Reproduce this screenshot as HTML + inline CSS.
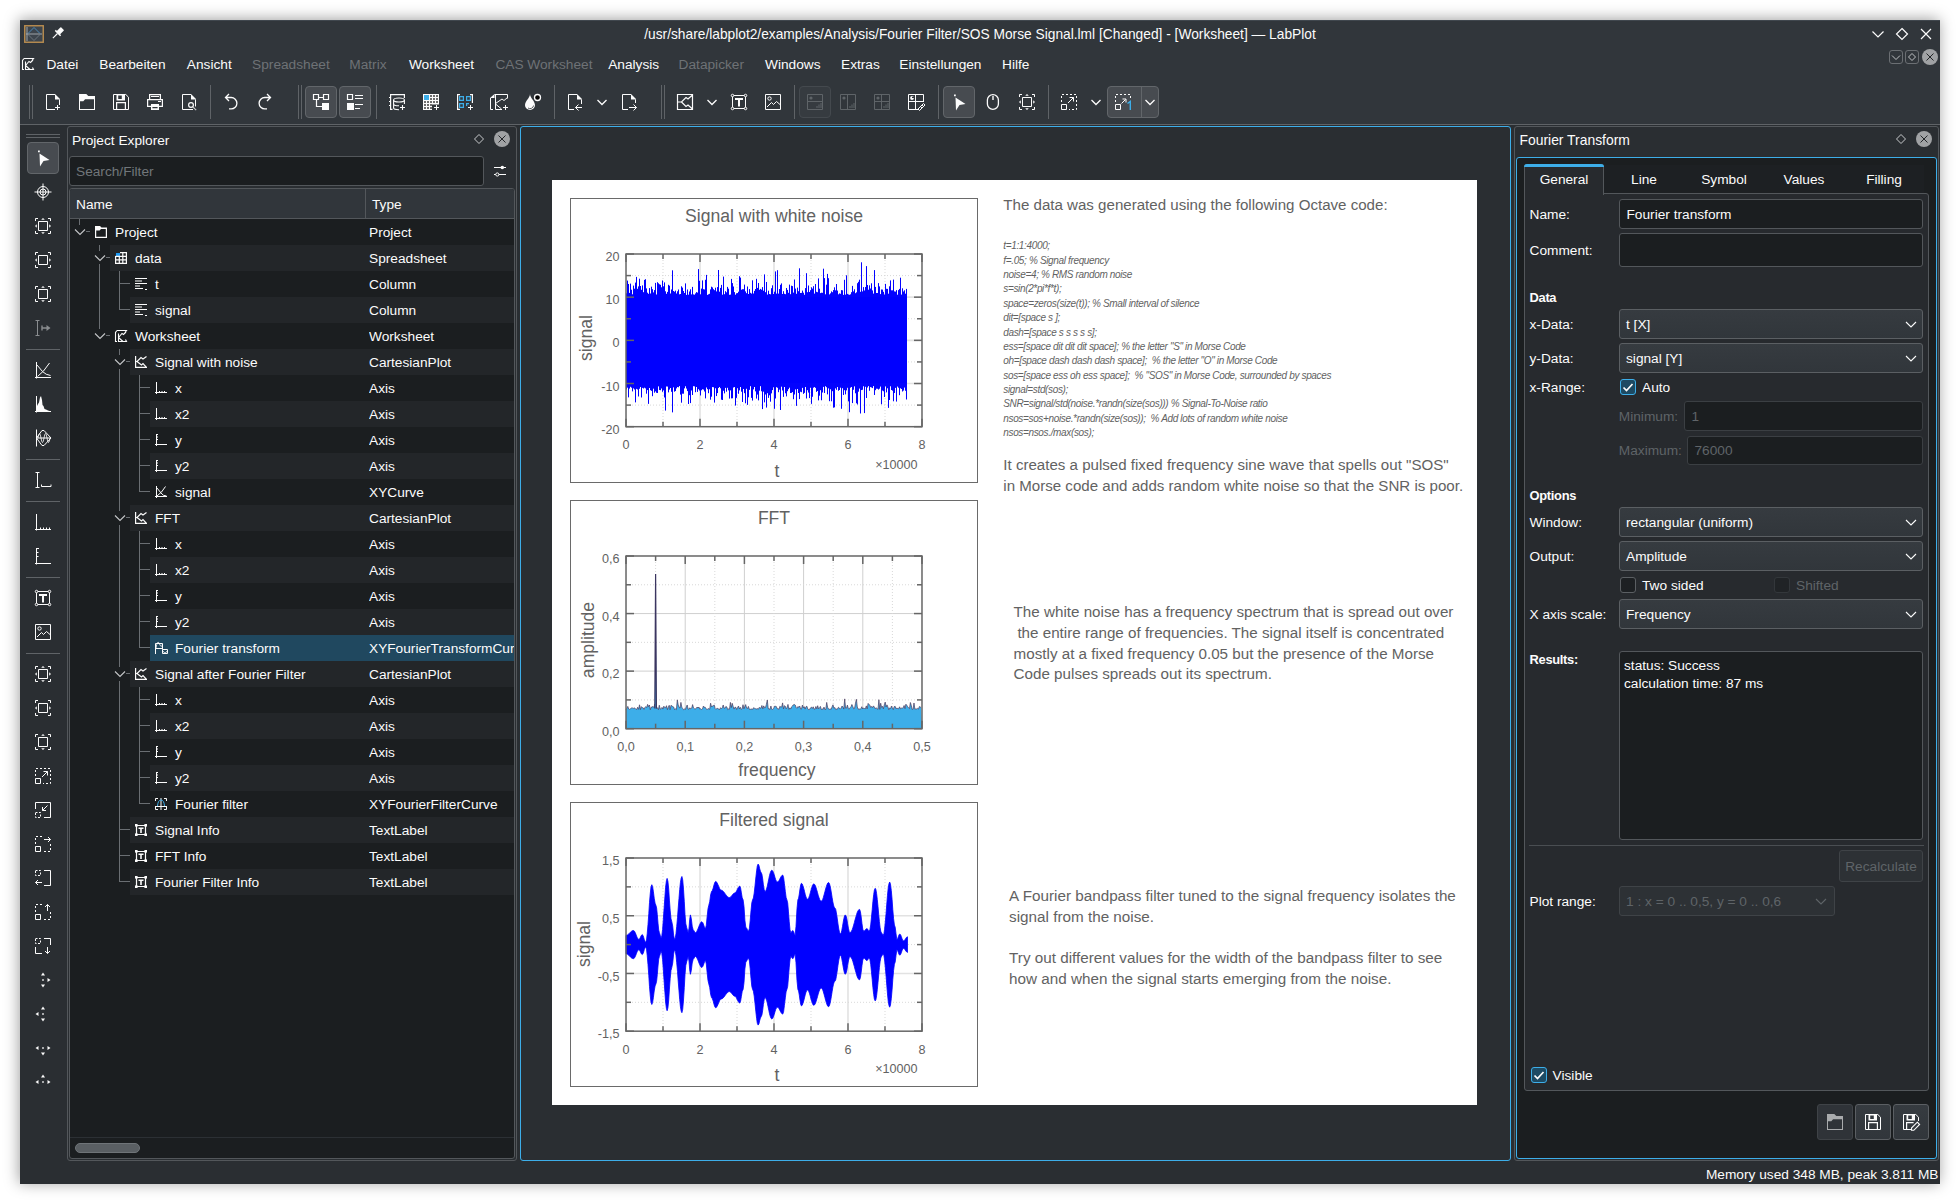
<!DOCTYPE html>
<html><head><meta charset="utf-8"><title>LabPlot</title>
<style>
html,body{margin:0;padding:0;background:#fff;}
body{width:1960px;height:1204px;position:relative;overflow:hidden;font-family:"Liberation Sans", sans-serif;}
div,svg{position:absolute;box-sizing:border-box;}
.t{white-space:pre;}
svg{overflow:visible;}
</style></head><body>

<div style="left:20px;top:20px;width:1920px;height:1164px;background:#2a2e32;box-shadow:-1px -1px 14px rgba(0,0,0,.38);"></div>
<div style="left:20px;top:20px;width:1920px;height:104px;background:#31363b;"></div>
<div style="left:20px;top:20px;width:1920px;height:1px;background:#40474e;"></div>
<div style="left:20px;top:124px;width:1920px;height:1px;background:#5f6367;"></div>
<svg style="left:24px;top:25px;" width="20" height="18" viewBox="0 0 20 18"><rect x="0.75" y="0.75" width="18.500" height="16.500" fill="#3d454d" stroke="#ba8e50" stroke-width="1.400"/><path d="M3 2v14M2 9h16" stroke="#b8bcc0" stroke-width="0.800" fill="none"/><path d="M4 8.500L10 2.500L16 8.500" stroke="#4b8fc2" stroke-width="0.900" fill="none"/><path d="M4 9.500L10 15.500L16 9.500" stroke="#7d8790" stroke-width="0.700" fill="none"/></svg>
<svg style="left:50px;top:26px;" width="15" height="15" viewBox="0 0 16 16"><g transform="rotate(45 8 8)" fill="#fcfcfc"><rect x="5.500" y="0.500" width="5" height="6.500" rx="0.800"/><rect x="4" y="6.500" width="8" height="1.600"/><rect x="7.400" y="8" width="1.200" height="7"/></g></svg>
<div class="t" style="left:480px;width:1000px;text-align:center;top:25px;font-size:13.75px;line-height:19px;color:#fcfcfc;">/usr/share/labplot2/examples/Analysis/Fourier Filter/SOS Morse Signal.lml [Changed] - [Worksheet] — LabPlot</div>
<svg style="left:1867px;top:23px;" width="22" height="22" viewBox="0 0 22 22"><path fill="none" stroke="#fcfcfc" stroke-width="1.2" d="M5.500 8.500L11 14L16.500 8.500"/></svg>
<svg style="left:1891px;top:23px;" width="22" height="22" viewBox="0 0 22 22"><path fill="none" stroke="#fcfcfc" stroke-width="1.2" d="M11 5.500L16.500 11L11 16.500L5.500 11z"/></svg>
<svg style="left:1915px;top:23px;" width="22" height="22" viewBox="0 0 22 22"><path fill="none" stroke="#fcfcfc" stroke-width="1.2" d="M6 6L16 16M16 6L6 16"/></svg>
<svg style="left:20px;top:56px;" width="16" height="16" viewBox="0 0 16 16"><path fill="none" stroke="#fcfcfc" stroke-width="1.1" d="M4 2.500H13.500L12 4.500M4 2.500L2.500 4.500V13.500H4M5.500 5.500v8h8l-1 -2M5.500 9.500L9 5.500L10.500 6.500L13 4M5.500 9.500L10 13.500"/></svg>
<div class="t" style="left:46.4px;top:55px;font-size:13.7px;line-height:19px;color:#fcfcfc;">Datei</div>
<div class="t" style="left:99.3px;top:55px;font-size:13.7px;line-height:19px;color:#fcfcfc;">Bearbeiten</div>
<div class="t" style="left:186.8px;top:55px;font-size:13.7px;line-height:19px;color:#fcfcfc;">Ansicht</div>
<div class="t" style="left:252.1px;top:55px;font-size:13.7px;line-height:19px;color:#6e7276;">Spreadsheet</div>
<div class="t" style="left:349.3px;top:55px;font-size:13.7px;line-height:19px;color:#6e7276;">Matrix</div>
<div class="t" style="left:408.9px;top:55px;font-size:13.7px;line-height:19px;color:#fcfcfc;">Worksheet</div>
<div class="t" style="left:495.4px;top:55px;font-size:13.7px;line-height:19px;color:#6e7276;">CAS Worksheet</div>
<div class="t" style="left:608.2px;top:55px;font-size:13.7px;line-height:19px;color:#fcfcfc;">Analysis</div>
<div class="t" style="left:678.6px;top:55px;font-size:13.7px;line-height:19px;color:#6e7276;">Datapicker</div>
<div class="t" style="left:765px;top:55px;font-size:13.7px;line-height:19px;color:#fcfcfc;">Windows</div>
<div class="t" style="left:841px;top:55px;font-size:13.7px;line-height:19px;color:#fcfcfc;">Extras</div>
<div class="t" style="left:899.3px;top:55px;font-size:13.7px;line-height:19px;color:#fcfcfc;">Einstellungen</div>
<div class="t" style="left:1002.1px;top:55px;font-size:13.7px;line-height:19px;color:#fcfcfc;">Hilfe</div>
<div style="left:1889px;top:50px;width:14px;height:14px;border:1px solid #6b6f73;border-radius:3px;"></div>
<svg style="left:1889px;top:50px;" width="14" height="14" viewBox="0 0 14 14"><path fill="none" stroke="#c0c2c4" stroke-width="1" d="M3 5.500L7 9.500L11 5.500"/></svg>
<div style="left:1905px;top:50px;width:14px;height:14px;border:1px solid #6b6f73;border-radius:3px;"></div>
<svg style="left:1905px;top:50px;" width="14" height="14" viewBox="0 0 14 14"><path fill="none" stroke="#c0c2c4" stroke-width="1" d="M7 3.500L10.500 7L7 10.500L3.500 7z"/></svg>
<svg style="left:1922px;top:49px;" width="16" height="16" viewBox="0 0 16 16"><circle cx="8" cy="8" r="8" fill="#a0a2a4"/><path fill="none" stroke="#232629" stroke-width="1" d="M4.500 4.500L11.500 11.500M11.500 4.500L4.500 11.500"/></svg>
<div style="left:29px;top:85px;width:1px;height:34px;background:#5f6367;"></div>
<div style="left:32px;top:85px;width:1px;height:34px;background:#5f6367;"></div>
<svg style="left:42px;top:91px;" width="22" height="22" viewBox="0 0 22 22"><path fill="none" stroke="#fcfcfc" stroke-width="1" d="M13 3.500H4.500V18.500H13M17.500 8.500V14M15.500 14v5M13 16.500h5"/><path fill="#fcfcfc" d="M13 3L18 8V8.500H13z"/></svg>
<svg style="left:76px;top:91px;" width="22" height="22" viewBox="0 0 22 22"><path fill="#fcfcfc" fill-rule="evenodd" d="M3 3h7.300l2 2H19v14H3zM4 10.300v7.700h14V8.200H9.100L7.300 10.300z"/></svg>
<svg style="left:110px;top:91px;" width="22" height="22" viewBox="0 0 22 22"><path fill="none" stroke="#fcfcfc" stroke-width="1" d="M3.500 3.500H15.800L18.500 6.200V18.500H3.500z"/><path fill="#fcfcfc" fill-rule="evenodd" d="M6.500 3.500h8.500v6h-8.500zM8.200 4.500v3.500h3.600v-3.500z"/><path fill="none" stroke="#fcfcfc" stroke-width="1.2" d="M6.600 18.500v-6.900h8.800v6.900"/></svg>
<svg style="left:144px;top:91px;" width="22" height="22" viewBox="0 0 22 22"><path fill="none" stroke="#fcfcfc" stroke-width="1.2" d="M5.600 8V3.600h10.800V8M3.600 8.600h14.800v6.800H3.600z"/><path fill="none" stroke="#fcfcfc" stroke-width="1" d="M7 5.500h8M14 10.500h3"/><path fill="#fcfcfc" fill-rule="evenodd" d="M7 13h8v6H7zM8.400 16v1.300h5.200V16z"/></svg>
<svg style="left:178px;top:91px;" width="22" height="22" viewBox="0 0 22 22"><path fill="none" stroke="#fcfcfc" stroke-width="1" d="M13 3.500H4.500V18.500H15M17.500 8.500V15.500"/><path fill="#fcfcfc" d="M13 3L18 8V8.500H13z"/><circle fill="none" stroke="#fcfcfc" stroke-width="1.2" cx="13" cy="14" r="2.400"/><path fill="none" stroke="#c8cacc" stroke-width="1.2" d="M14.800 15.800l3.400 3.400"/></svg>
<div style="left:210px;top:85px;width:1px;height:34px;background:#5f6367;"></div>
<svg style="left:220px;top:91px;" width="22" height="22" viewBox="0 0 22 22"><path fill="none" stroke="#fcfcfc" stroke-width="1.3" d="M9 3L5.500 6.500L9 10M5.500 6.500H11.200A5.700 5.700 0 0 1 11.200 17.900H9"/></svg>
<svg style="left:254px;top:91px;" width="22" height="22" viewBox="0 0 22 22"><path fill="none" stroke="#fcfcfc" stroke-width="1.3" d="M13 3L16.500 6.500L13 10M16.500 6.500H10.800A5.700 5.700 0 0 0 10.800 17.900H13"/></svg>
<div style="left:298px;top:85px;width:1px;height:34px;background:#5f6367;"></div>
<div style="left:301px;top:85px;width:1px;height:34px;background:#5f6367;"></div>
<div style="left:305px;top:86px;width:32px;height:32px;background:#474b50;border:1px solid #62666a;border-radius:4px;"></div>
<svg style="left:310px;top:91px;" width="22" height="22" viewBox="0 0 22 22"><path fill="none" stroke="#fcfcfc" stroke-width="1.2" d="M3.500 3.500h5v5h-5zM13.500 3.500h5v5h-5zM8.500 6.500h5M6.500 8.500v7h6"/><path fill="#fcfcfc" d="M12 12h7v7h-7z"/></svg>
<div style="left:339px;top:86px;width:32px;height:32px;background:#474b50;border:1px solid #62666a;border-radius:4px;"></div>
<svg style="left:344px;top:91px;" width="22" height="22" viewBox="0 0 22 22"><path fill="none" stroke="#fcfcfc" stroke-width="1.2" d="M3.500 3.500h5v5h-5zM11 4.500h8M11 7.500h8M11 13.500h8M11 17.500h5"/><path fill="#fcfcfc" d="M3 12h7v7H3z"/></svg>
<div style="left:376px;top:85px;width:1px;height:34px;background:#5f6367;"></div>
<svg style="left:386px;top:91px;" width="22" height="22" viewBox="0 0 22 22"><path fill="none" stroke="#fcfcfc" stroke-width="1.2" d="M18.400 7V3.600H4.600V18.400H6.500M3 6.500h1.500M3 10.500h1.500M3 14.500h1.500"/><ellipse fill="none" stroke="#fcfcfc" stroke-width="1.1" cx="13" cy="9" rx="5.400" ry="2"/><path fill="none" stroke="#fcfcfc" stroke-width="1.1" d="M7.600 9v8c0 1 2.300 1.700 5.400 1.700M18.400 9v4M7.600 13c0 1 2.300 1.800 5.400 1.800M16.500 14v5M14 16.500h5"/></svg>
<svg style="left:420px;top:91px;" width="22" height="22" viewBox="0 0 22 22"><path fill="#fcfcfc" d="M3 3h16v10.500h-7v5.500H3z"/><path fill="#3daee9" d="M4 4h5v5H4z"/><rect x="4.25" y="10.25" width="1.500" height="1.500" fill="#000"/><rect x="4.25" y="13.25" width="1.500" height="1.500" fill="#000"/><rect x="4.25" y="16.25" width="1.500" height="1.500" fill="#000"/><rect x="7.25" y="10.25" width="1.500" height="1.500" fill="#000"/><rect x="7.25" y="13.25" width="1.500" height="1.500" fill="#000"/><rect x="7.25" y="16.25" width="1.500" height="1.500" fill="#000"/><rect x="10.25" y="4.25" width="1.500" height="1.500" fill="#000"/><rect x="10.25" y="7.25" width="1.500" height="1.500" fill="#000"/><rect x="10.25" y="10.25" width="1.500" height="1.500" fill="#000"/><rect x="10.25" y="13.25" width="1.500" height="1.500" fill="#000"/><rect x="10.25" y="16.25" width="1.500" height="1.500" fill="#000"/><rect x="13.25" y="4.25" width="1.500" height="1.500" fill="#000"/><rect x="13.25" y="7.25" width="1.500" height="1.500" fill="#000"/><rect x="13.25" y="10.25" width="1.500" height="1.500" fill="#000"/><rect x="16.25" y="4.25" width="1.500" height="1.500" fill="#000"/><rect x="16.25" y="7.25" width="1.500" height="1.500" fill="#000"/><rect x="16.25" y="10.25" width="1.500" height="1.500" fill="#000"/><path fill="none" stroke="#fcfcfc" stroke-width="1" d="M16.500 14v5M14 16.500h5"/></svg>
<svg style="left:454px;top:91px;" width="22" height="22" viewBox="0 0 22 22"><path fill="none" stroke="#fcfcfc" stroke-width="1.2" d="M6 3.600H3.600V18.400H6M16 3.600h2.400V12"/><path fill="none" stroke="#fcfcfc" stroke-width="1" d="M16.500 14v5M14 16.500h5"/><path fill="none" stroke="#3daee9" stroke-width="1.2" d="M5.600 5.600h3.800v3.800h-3.800zM12.600 5.600h3.800v3.800h-3.800zM5.600 12.600h3.800v3.800h-3.800zM12.600 15v-2.400h2.400"/></svg>
<svg style="left:488px;top:91px;" width="22" height="22" viewBox="0 0 22 22"><path fill="none" stroke="#fcfcfc" stroke-width="1" d="M6.500 3.500H19.500V7.500M2.500 7V18.500H5M7.500 4v14.500H14M7.500 12.500L14 8L16 9.500L19.500 6.500M7.500 13L13.500 18M17.500 14v5M15 16.500h5"/><path fill="#fcfcfc" d="M2 7L6.500 3V7z"/></svg>
<svg style="left:522px;top:91px;" width="22" height="22" viewBox="0 0 22 22"><path fill="#fcfcfc" d="M8 3C8 7 3 10 3 14.200a5 4.800 0 0 0 10 0C13 10 8 7 8 3z"/><path fill="none" stroke="#31363b" stroke-width="0.800" d="M6 17a3.600 3.600 0 0 0 5.600 -2.500"/><circle cx="15.500" cy="6.500" r="3" fill="#000" stroke="#fcfcfc" stroke-width="1.300"/></svg>
<div style="left:554px;top:85px;width:1px;height:34px;background:#5f6367;"></div>
<svg style="left:564px;top:91px;" width="22" height="22" viewBox="0 0 22 22"><path fill="none" stroke="#fcfcfc" stroke-width="1" d="M13 3.500H4.500V18.500H10M17.500 8.500V13M18 16.500H11.500M14.500 13.500L11.500 16.500L14.500 19.500"/><path fill="#fcfcfc" d="M13 3L18 8V8.500H13z"/></svg>
<svg style="left:591px;top:91px;" width="22" height="22" viewBox="0 0 22 22"><path fill="none" stroke="#fcfcfc" stroke-width="1.3" d="M6.500 9L11 13.500L15.500 9"/></svg>
<svg style="left:618px;top:91px;" width="22" height="22" viewBox="0 0 22 22"><path fill="none" stroke="#fcfcfc" stroke-width="1" d="M13 3.500H4.500V18.500H10M17.500 8.500V12M11 16.500H18.500M15.500 13.500L18.500 16.500L15.500 19.500"/><path fill="#fcfcfc" d="M13 3L18 8V8.500H13z"/></svg>
<div style="left:661px;top:85px;width:1px;height:34px;background:#5f6367;"></div>
<div style="left:664px;top:85px;width:1px;height:34px;background:#5f6367;"></div>
<svg style="left:674px;top:91px;" width="22" height="22" viewBox="0 0 22 22"><path fill="none" stroke="#fcfcfc" stroke-width="1.2" d="M3.500 3.500h15v15h-15zM4 11h3.500L12 6.500L14 8L18.500 4M7.500 11L12 15.500L14 14L18.500 18"/></svg>
<svg style="left:701px;top:91px;" width="22" height="22" viewBox="0 0 22 22"><path fill="none" stroke="#fcfcfc" stroke-width="1.3" d="M6.500 9L11 13.500L15.500 9"/></svg>
<svg style="left:728px;top:91px;" width="22" height="22" viewBox="0 0 22 22"><path fill="none" stroke="#fcfcfc" stroke-width="1" d="M4.500 4.500h13v13h-13z"/><path fill="#fcfcfc" d="M7 7h8v2h-3v6.500h-2V9H7z"/><circle cx="4.5" cy="4.5" r="1.250" fill="#31363b" stroke="#fcfcfc" stroke-width="1"/><circle cx="17.5" cy="4.5" r="1.250" fill="#31363b" stroke="#fcfcfc" stroke-width="1"/><circle cx="4.5" cy="17.5" r="1.250" fill="#31363b" stroke="#fcfcfc" stroke-width="1"/><circle cx="17.5" cy="17.5" r="1.250" fill="#31363b" stroke="#fcfcfc" stroke-width="1"/></svg>
<svg style="left:762px;top:91px;" width="22" height="22" viewBox="0 0 22 22"><path fill="none" stroke="#fcfcfc" stroke-width="1" d="M3.500 3.500h15v15h-15z"/><circle fill="none" stroke="#fcfcfc" stroke-width="1" cx="7.500" cy="7.500" r="1.700"/><path fill="none" stroke="#fcfcfc" stroke-width="1" d="M5 16L9.500 11.500L11.500 13.500L14.500 10.500L18 13.500"/></svg>
<div style="left:794px;top:85px;width:1px;height:34px;background:#5f6367;"></div>
<div style="left:799px;top:86px;width:32px;height:32px;background:#363b40;border:1px solid #44494e;border-radius:4px;"></div>
<svg style="left:804px;top:91px;" width="22" height="22" viewBox="0 0 22 22"><path fill="none" stroke="#5f6468" stroke-width="1" d="M3.500 3.500h15v15h-15zM3.500 10.500h15M13 17v-2M15 17v-3.500M17 17v-5"/><circle cx="7" cy="7" r="1.600" fill="#5f6468"/></svg>
<svg style="left:837px;top:91px;" width="22" height="22" viewBox="0 0 22 22"><path fill="none" stroke="#5f6468" stroke-width="1" d="M3.500 3.500h15v15h-15zM10.500 3.500v15M13 17v-2M15 17v-3.500M17 17v-5"/><circle cx="7" cy="7" r="1.600" fill="#5f6468"/></svg>
<svg style="left:871px;top:91px;" width="22" height="22" viewBox="0 0 22 22"><path fill="none" stroke="#5f6468" stroke-width="1" d="M3.500 3.500h15v15h-15zM10.500 3.500v15M3.500 10.500h15M13 17v-2M15 17v-3.500M17 17v-5"/><circle cx="7" cy="7" r="1.600" fill="#5f6468"/></svg>
<svg style="left:905px;top:91px;" width="22" height="22" viewBox="0 0 22 22"><path fill="none" stroke="#fcfcfc" stroke-width="1" d="M14 18.500H3.500v-15h15V11M10.500 3.500v15M3.500 10.500h15"/><circle cx="7" cy="7" r="1.900" fill="#fcfcfc"/><path fill="#31363b" d="M7 7h2.500v-1.200H7z"/><path fill="none" stroke="#fcfcfc" stroke-width="1" d="M18.500 12.500l1.500 1.500l-5.500 5.500l-1.500 -1.500zM17 14l1.500 1.500M15.500 15.500l1.500 1.500"/></svg>
<div style="left:938px;top:85px;width:1px;height:34px;background:#5f6367;"></div>
<div style="left:943px;top:86px;width:32px;height:32px;background:#474b50;border:1px solid #62666a;border-radius:4px;"></div>
<svg style="left:948px;top:91px;" width="22" height="22" viewBox="0 0 22 22"><path fill="#fcfcfc" d="M7.500 6.500L17.500 13L11.500 14L8 19.500z"/><path fill="#fcfcfc" d="M6 3.500h1.800v1.800H6z"/></svg>
<svg style="left:982px;top:91px;" width="22" height="22" viewBox="0 0 22 22"><rect fill="none" stroke="#fcfcfc" stroke-width="1.3" x="5.400" y="3.600" width="11" height="14.800" rx="5.500" ry="5.500"/><path fill="#fcfcfc" d="M10.300 5h1.400v4h-1.400z"/></svg>
<svg style="left:1016px;top:91px;" width="22" height="22" viewBox="0 0 22 22"><path fill="none" stroke="#fcfcfc" stroke-width="1" d="M3.500 6V3.500H6M16 3.500h2.500V6M18.500 16v2.500H16M6 18.500H3.500V16M6.500 6.500h9v9h-9z"/><path fill="#fcfcfc" d="M3 11l1.800 -1.800v3.600zM19 11l-1.800 -1.800v3.600z"/><path fill="#fcfcfc" d="M11 3l-1.800 1.800h3.600zM11 19l-1.800 -1.800h3.600z"/></svg>
<div style="left:1048px;top:85px;width:1px;height:34px;background:#5f6367;"></div>
<svg style="left:1058px;top:91px;" width="22" height="22" viewBox="0 0 22 22"><path fill="none" stroke="#fcfcfc" stroke-width="1" stroke-dasharray="2 2" d="M3.500 11V3.500H18.500V18.500H11"/><path fill="none" stroke="#fcfcfc" stroke-width="1" d="M3.500 13.500h5v5h-5zM10 12l5.500 -5.500M11.500 6.500h4v4"/></svg>
<svg style="left:1085px;top:91px;" width="22" height="22" viewBox="0 0 22 22"><path fill="none" stroke="#fcfcfc" stroke-width="1.3" d="M6.500 9L11 13.500L15.500 9"/></svg>
<div style="left:1107px;top:86px;width:52px;height:32px;background:#474b50;border:1px solid #62666a;border-radius:4px;"></div>
<div style="left:1141px;top:87px;width:1px;height:30px;background:#62666a;"></div>
<svg style="left:1112px;top:91px;" width="22" height="22" viewBox="0 0 22 22"><path fill="none" stroke="#fcfcfc" stroke-width="1" stroke-dasharray="2 2" d="M3.500 11V3.500H18.500V7.500"/><path fill="none" stroke="#fcfcfc" stroke-width="1" d="M3.500 13.500h5v5h-5zM9.500 12.500l4 -4M10.500 8h3.500v3.500"/><path fill="none" stroke="#3daee9" stroke-width="1.4" d="M15.500 12.500L18.300 10.400V19"/></svg>
<svg style="left:1139px;top:91px;" width="22" height="22" viewBox="0 0 22 22"><path fill="none" stroke="#fcfcfc" stroke-width="1.3" d="M6.500 9L11 13.500L15.500 9"/></svg>
<div style="left:26px;top:134px;width:34px;height:1px;background:#5f6367;"></div>
<div style="left:26px;top:137px;width:34px;height:1px;background:#5f6367;"></div>
<div style="left:27px;top:142px;width:32px;height:32px;background:#474b50;border:1px solid #62666a;border-radius:4px;"></div>
<svg style="left:32px;top:147px;" width="22" height="22" viewBox="0 0 22 22"><path fill="#fcfcfc" d="M7.500 6.500L17.500 13L11.500 14L8 19.500z"/><path fill="#fcfcfc" d="M6 3.500h1.800v1.800H6z"/></svg>
<svg style="left:32px;top:181px;" width="22" height="22" viewBox="0 0 22 22"><circle fill="none" stroke="#fcfcfc" stroke-width="1" cx="11" cy="11" r="5.500"/><circle fill="none" stroke="#fcfcfc" stroke-width="1" cx="11" cy="11" r="3"/><path fill="none" stroke="#fcfcfc" stroke-width="1" d="M11 2.500v17M2.500 11h17"/></svg>
<svg style="left:32px;top:215px;" width="22" height="22" viewBox="0 0 22 22"><path fill="none" stroke="#fcfcfc" stroke-width="1" d="M3.500 6V3.500H6M16 3.500h2.500V6M18.500 16v2.500H16M6 18.500H3.500V16M6.500 6.500h9v9h-9z"/><path fill="#fcfcfc" d="M3 11l1.800 -1.800v3.600zM19 11l-1.800 -1.800v3.600z"/><path fill="#fcfcfc" d="M11 3l-1.800 1.800h3.600zM11 19l-1.800 -1.800h3.600z"/></svg>
<svg style="left:32px;top:249px;" width="22" height="22" viewBox="0 0 22 22"><path fill="none" stroke="#fcfcfc" stroke-width="1" d="M3.500 6V3.500H6M16 3.500h2.500V6M18.500 16v2.500H16M6 18.500H3.500V16M6.500 6.500h9v9h-9z"/><path fill="#fcfcfc" d="M3 11l1.800 -1.800v3.600zM19 11l-1.800 -1.800v3.600z"/></svg>
<svg style="left:32px;top:283px;" width="22" height="22" viewBox="0 0 22 22"><path fill="none" stroke="#fcfcfc" stroke-width="1" d="M3.500 6V3.500H6M16 3.500h2.500V6M18.500 16v2.500H16M6 18.500H3.500V16M6.500 6.500h9v9h-9z"/><path fill="#fcfcfc" d="M11 3l-1.800 1.800h3.600zM11 19l-1.800 -1.800h3.600z"/></svg>
<svg style="left:32px;top:317px;" width="22" height="22" viewBox="0 0 22 22"><path fill="none" stroke="#8a8d90" stroke-width="1" d="M3.500 3.500h4M5.500 3.500v15M3.500 18.500h4"/><path fill="none" stroke="#8a8d90" stroke-width="1.4" d="M10 11h6M10 8.500v5"/><path fill="#8a8d90" d="M14.500 8l4 3l-4 3z"/></svg>
<svg style="left:32px;top:359px;" width="22" height="22" viewBox="0 0 22 22"><path fill="none" stroke="#fcfcfc" stroke-width="1" d="M4.500 3v16.500M3 18.500h16M5 6l5.500 6.500Q14 16 18.500 16.500M5.500 17.500l6 -5.500L17.500 4"/></svg>
<svg style="left:32px;top:393px;" width="22" height="22" viewBox="0 0 22 22"><path fill="none" stroke="#fcfcfc" stroke-width="1" d="M4.500 3v16.500M3 18.500h16"/><path fill="#fcfcfc" d="M5 18V13l1 -2l1 -1.500l1 -5l1 -1.500l1 4l.5 5l1 1l1 3l1.500 .5l2 1l1.500 .5v0z"/></svg>
<svg style="left:32px;top:427px;" width="22" height="22" viewBox="0 0 22 22"><path fill="none" stroke="#fcfcfc" stroke-width="1" d="M4.500 2.500v17M4.500 11L10 3.500h2L19 11L12 18.500h-2zM5 11h14"/><path fill="none" stroke="#fcfcfc" stroke-width="0.8" d="M6 11q1.500 -9 3 0t3 0t3 0t3 0"/></svg>
<svg style="left:32px;top:469px;" width="22" height="22" viewBox="0 0 22 22"><path fill="none" stroke="#fcfcfc" stroke-width="1" d="M3.500 3.500h4M5.500 3.500v15M3.500 18.500h4M9.500 17.500h9.500v-2M9.500 15.500v2"/></svg>
<svg style="left:32px;top:511px;" width="22" height="22" viewBox="0 0 22 22"><path fill="none" stroke="#fcfcfc" stroke-width="1" d="M4.500 3v16.500M3 18.500h16M8.500 18.500v-2M11.500 18.500v-2M14.500 18.500v-2M17.500 18.500v-2"/></svg>
<svg style="left:32px;top:545px;" width="22" height="22" viewBox="0 0 22 22"><path fill="none" stroke="#fcfcfc" stroke-width="1" d="M4.500 3v16.500M3 18.500h16M4.500 3.500h2.500M4.500 7.500h2M4.500 11.500h2"/></svg>
<svg style="left:32px;top:587px;" width="22" height="22" viewBox="0 0 22 22"><path fill="none" stroke="#fcfcfc" stroke-width="1" d="M4.500 4.500h13v13h-13z"/><path fill="#fcfcfc" d="M7 7h8v2h-3v6.500h-2V9H7z"/><circle cx="4.5" cy="4.5" r="1.250" fill="#2a2e32" stroke="#fcfcfc" stroke-width="1"/><circle cx="17.5" cy="4.5" r="1.250" fill="#2a2e32" stroke="#fcfcfc" stroke-width="1"/><circle cx="4.5" cy="17.5" r="1.250" fill="#2a2e32" stroke="#fcfcfc" stroke-width="1"/><circle cx="17.5" cy="17.5" r="1.250" fill="#2a2e32" stroke="#fcfcfc" stroke-width="1"/></svg>
<svg style="left:32px;top:621px;" width="22" height="22" viewBox="0 0 22 22"><path fill="none" stroke="#fcfcfc" stroke-width="1" d="M3.500 3.500h15v15h-15z"/><circle fill="none" stroke="#fcfcfc" stroke-width="1" cx="7.500" cy="7.500" r="1.700"/><path fill="none" stroke="#fcfcfc" stroke-width="1" d="M5 16L9.500 11.500L11.500 13.500L14.500 10.500L18 13.500"/></svg>
<svg style="left:32px;top:663px;" width="22" height="22" viewBox="0 0 22 22"><path fill="none" stroke="#fcfcfc" stroke-width="1" d="M3.500 6V3.500H6M16 3.500h2.500V6M18.500 16v2.500H16M6 18.500H3.500V16M6.500 6.500h9v9h-9z"/><path fill="#fcfcfc" d="M3 11l1.800 -1.800v3.600zM19 11l-1.800 -1.800v3.600z"/><path fill="#fcfcfc" d="M11 3l-1.800 1.800h3.600zM11 19l-1.800 -1.800h3.600z"/></svg>
<svg style="left:32px;top:697px;" width="22" height="22" viewBox="0 0 22 22"><path fill="none" stroke="#fcfcfc" stroke-width="1" d="M3.500 6V3.500H6M16 3.500h2.500V6M18.500 16v2.500H16M6 18.500H3.500V16M6.500 6.500h9v9h-9z"/><path fill="#fcfcfc" d="M3 11l1.800 -1.800v3.600zM19 11l-1.800 -1.800v3.600z"/></svg>
<svg style="left:32px;top:731px;" width="22" height="22" viewBox="0 0 22 22"><path fill="none" stroke="#fcfcfc" stroke-width="1" d="M3.500 6V3.500H6M16 3.500h2.500V6M18.500 16v2.500H16M6 18.500H3.500V16M6.500 6.500h9v9h-9z"/><path fill="#fcfcfc" d="M11 3l-1.800 1.800h3.600zM11 19l-1.800 -1.800h3.600z"/></svg>
<svg style="left:32px;top:765px;" width="22" height="22" viewBox="0 0 22 22"><path fill="none" stroke="#fcfcfc" stroke-width="1" stroke-dasharray="2 2" d="M3.500 11V3.500H18.500V18.500H11"/><path fill="none" stroke="#fcfcfc" stroke-width="1" d="M3.500 13.500h5v5h-5zM10 12l5.500 -5.500M11.500 6.500h4v4"/></svg>
<svg style="left:32px;top:799px;" width="22" height="22" viewBox="0 0 22 22"><path fill="none" stroke="#fcfcfc" stroke-width="1" d="M3.500 10V3.500H18.500V18.500H12M15.500 6.500L10.500 11.500M10.500 8v3.500h3.500"/><path fill="none" stroke="#fcfcfc" stroke-width="1" stroke-dasharray="2 1.500" d="M3.500 13.500h5v5h-5z"/></svg>
<svg style="left:32px;top:833px;" width="22" height="22" viewBox="0 0 22 22"><path fill="none" stroke="#fcfcfc" stroke-width="1" stroke-dasharray="2 2" d="M3.500 11V3.500H10M18.500 11V18.500H11"/><path fill="none" stroke="#fcfcfc" stroke-width="1" d="M3.500 13.500h5v5h-5zM12 6.500h6.500M16 4l2.500 2.500L16 9"/></svg>
<svg style="left:32px;top:867px;" width="22" height="22" viewBox="0 0 22 22"><path fill="none" stroke="#fcfcfc" stroke-width="1" stroke-dasharray="2 1.500" d="M3.500 3.500h5v5h-5z"/><path fill="none" stroke="#fcfcfc" stroke-width="1" d="M12 3.500h6.500v15H12M10 15.500H3.500M6 13l-2.500 2.500L6 18"/></svg>
<svg style="left:32px;top:901px;" width="22" height="22" viewBox="0 0 22 22"><path fill="none" stroke="#fcfcfc" stroke-width="1" stroke-dasharray="2 2" d="M3.500 11V3.500H10M18.500 11V18.500H11"/><path fill="none" stroke="#fcfcfc" stroke-width="1" d="M3.500 13.500h5v5h-5zM15.500 10V3.500M13 6l2.500 -2.500L18 6"/></svg>
<svg style="left:32px;top:935px;" width="22" height="22" viewBox="0 0 22 22"><path fill="none" stroke="#fcfcfc" stroke-width="1" stroke-dasharray="2 1.500" d="M3.500 3.500h5v5h-5z"/><path fill="none" stroke="#fcfcfc" stroke-width="1" d="M12 3.500h6.500V10M3.500 12v6.500H10M15.500 12v6.500M13 16l2.500 2.500L18 16"/></svg>
<svg style="left:32px;top:969px;" width="22" height="22" viewBox="0 0 22 22"><path fill="#fcfcfc" d="M10.200 10.200h1.600v1.600h-1.600z"/><path fill="#fcfcfc" d="M11 3.500l2 3h-4z"/><path fill="#fcfcfc" d="M11 18.500l2 -3h-4z"/><path fill="#fcfcfc" d="M18.500 11l-3 -2v4z"/></svg>
<svg style="left:32px;top:1003px;" width="22" height="22" viewBox="0 0 22 22"><path fill="#fcfcfc" d="M10.200 10.200h1.600v1.600h-1.600z"/><path fill="#fcfcfc" d="M11 3.500l2 3h-4z"/><path fill="#fcfcfc" d="M11 18.500l2 -3h-4z"/><path fill="#fcfcfc" d="M3.500 11l3 -2v4z"/></svg>
<svg style="left:32px;top:1037px;" width="22" height="22" viewBox="0 0 22 22"><path fill="#fcfcfc" d="M10.200 10.200h1.600v1.600h-1.600z"/><path fill="#fcfcfc" d="M11 18.500l2 -3h-4z"/><path fill="#fcfcfc" d="M3.500 11l3 -2v4z"/><path fill="#fcfcfc" d="M18.500 11l-3 -2v4z"/></svg>
<svg style="left:32px;top:1071px;" width="22" height="22" viewBox="0 0 22 22"><path fill="#fcfcfc" d="M10.200 10.200h1.600v1.600h-1.600z"/><path fill="#fcfcfc" d="M11 3.500l2 3h-4z"/><path fill="#fcfcfc" d="M3.500 11l3 -2v4z"/><path fill="#fcfcfc" d="M18.500 11l-3 -2v4z"/></svg>
<div style="left:26px;top:349px;width:34px;height:1px;background:#5f6367;"></div>
<div style="left:26px;top:459px;width:34px;height:1px;background:#5f6367;"></div>
<div style="left:26px;top:501px;width:34px;height:1px;background:#5f6367;"></div>
<div style="left:26px;top:577px;width:34px;height:1px;background:#5f6367;"></div>
<div style="left:26px;top:653px;width:34px;height:1px;background:#5f6367;"></div>
<div style="left:67px;top:126px;width:450px;height:1035px;border:1px solid #53575b;border-radius:3px;"></div>
<div class="t" style="left:72px;top:131px;font-size:13.7px;line-height:19px;color:#fcfcfc;">Project Explorer</div>
<svg style="left:473px;top:133px;" width="12" height="12" viewBox="0 0 12 12"><path fill="none" stroke="#c8cacc" stroke-width="1" d="M6 1.500L10.500 6L6 10.500L1.500 6z"/></svg>
<svg style="left:494px;top:131px;" width="16" height="16" viewBox="0 0 16 16"><circle cx="8" cy="8" r="8" fill="#a0a2a4"/><path fill="none" stroke="#232629" stroke-width="1" d="M4.500 4.500L11.500 11.500M11.500 4.500L4.500 11.500"/></svg>
<div style="left:69px;top:156px;width:415px;height:30px;background:#1b1e20;border:1px solid #53575b;border-radius:3px;"></div>
<div class="t" style="left:76px;top:162px;font-size:13.7px;line-height:19px;color:#71767a;">Search/Filter</div>
<svg style="left:492px;top:163px;" width="16" height="16" viewBox="0 0 16 16"><path fill="none" stroke="#fcfcfc" stroke-width="1" d="M2 4.500h12M2 11.500h12"/><circle cx="10.300" cy="4.500" r="1.800" fill="#fcfcfc"/><circle cx="5.300" cy="11.500" r="1.600" fill="#2a2e32" stroke="#fcfcfc" stroke-width="1"/></svg>
<div style="left:69px;top:188px;width:446px;height:971px;background:#1b1e20;border:1px solid #53575b;border-radius:3px;"></div>
<div style="left:70px;top:189px;width:444px;height:30px;background:#31363b;border-bottom:1px solid #53575b;border-radius:2px 2px 0 0;"></div>
<div style="left:365px;top:189px;width:1px;height:29px;background:#53575b;"></div>
<div class="t" style="left:76px;top:195px;font-size:13.7px;line-height:19px;color:#fcfcfc;">Name</div>
<div class="t" style="left:372px;top:195px;font-size:13.7px;line-height:19px;color:#fcfcfc;">Type</div>
<svg style="left:93px;top:224px;" width="16" height="16" viewBox="0 0 16 16"><path fill="#fcfcfc" fill-rule="evenodd" d="M2 2h5l1.500 1.500H14V14H2zM3.200 6.500v6.300h9.600V5h-4.800L6.500 6.500z"/></svg>
<div class="t" style="left:115px;top:223px;font-size:13.7px;line-height:19px;color:#fcfcfc;">Project</div>
<div style="left:369px;top:219px;width:145px;height:26px;overflow:hidden;"><div class="t" style="left:0px;top:4px;font-size:13.7px;line-height:19px;color:#fcfcfc;">Project</div></div>
<svg style="left:74px;top:226px;" width="12" height="12" viewBox="0 0 12 12"><path fill="none" stroke="#c4c6c8" stroke-width="1.1" d="M1 3.500L6 8.500L11 3.500"/></svg>
<div style="left:86px;top:231px;width:4px;height:1px;background:#6a6e72;"></div>
<div style="left:110px;top:245px;width:404px;height:26px;background:#232629;"></div>
<svg style="left:113px;top:250px;" width="16" height="16" viewBox="0 0 16 16"><path fill="#1d99f3" d="M3 3h4v3H3z"/><path fill="none" stroke="#fcfcfc" stroke-width="1.2" d="M2.600 6V13.400H13.400V2.600H7M2.600 6.300h10.800M2.600 9.800h10.800M6.300 6v7.400M9.800 2.600v10.800"/></svg>
<div class="t" style="left:135px;top:249px;font-size:13.7px;line-height:19px;color:#fcfcfc;">data</div>
<div style="left:369px;top:245px;width:145px;height:26px;overflow:hidden;"><div class="t" style="left:0px;top:4px;font-size:13.7px;line-height:19px;color:#fcfcfc;">Spreadsheet</div></div>
<svg style="left:94px;top:252px;" width="12" height="12" viewBox="0 0 12 12"><path fill="none" stroke="#c4c6c8" stroke-width="1.1" d="M1 3.500L6 8.500L11 3.500"/></svg>
<div style="left:106px;top:257px;width:4px;height:1px;background:#6a6e72;"></div>
<svg style="left:133px;top:276px;" width="16" height="16" viewBox="0 0 16 16"><path fill="none" stroke="#fcfcfc" stroke-width="1" d="M2 2.500h12M2 5h7M2 7.500h12M2 10h5M2 12.500h8M12 13.500h2"/></svg>
<div class="t" style="left:155px;top:275px;font-size:13.7px;line-height:19px;color:#fcfcfc;">t</div>
<div style="left:369px;top:271px;width:145px;height:26px;overflow:hidden;"><div class="t" style="left:0px;top:4px;font-size:13.7px;line-height:19px;color:#fcfcfc;">Column</div></div>
<div style="left:120px;top:283px;width:10px;height:1px;background:#6a6e72;"></div>
<div style="left:130px;top:297px;width:384px;height:26px;background:#232629;"></div>
<svg style="left:133px;top:302px;" width="16" height="16" viewBox="0 0 16 16"><path fill="none" stroke="#fcfcfc" stroke-width="1" d="M2 2.500h12M2 5h7M2 7.500h12M2 10h5M2 12.500h8M12 13.500h2"/></svg>
<div class="t" style="left:155px;top:301px;font-size:13.7px;line-height:19px;color:#fcfcfc;">signal</div>
<div style="left:369px;top:297px;width:145px;height:26px;overflow:hidden;"><div class="t" style="left:0px;top:4px;font-size:13.7px;line-height:19px;color:#fcfcfc;">Column</div></div>
<div style="left:120px;top:309px;width:10px;height:1px;background:#6a6e72;"></div>
<svg style="left:113px;top:328px;" width="16" height="16" viewBox="0 0 16 16"><path fill="none" stroke="#fcfcfc" stroke-width="1.1" d="M4 2.500H13.500L12 4.500M4 2.500L2.500 4.500V13.500H4M5.500 5.500v8h8l-1 -2M5.500 9.500L9 5.500L10.500 6.500L13 4M5.500 9.500L10 13.500"/></svg>
<div class="t" style="left:135px;top:327px;font-size:13.7px;line-height:19px;color:#fcfcfc;">Worksheet</div>
<div style="left:369px;top:323px;width:145px;height:26px;overflow:hidden;"><div class="t" style="left:0px;top:4px;font-size:13.7px;line-height:19px;color:#fcfcfc;">Worksheet</div></div>
<svg style="left:94px;top:330px;" width="12" height="12" viewBox="0 0 12 12"><path fill="none" stroke="#c4c6c8" stroke-width="1.1" d="M1 3.500L6 8.500L11 3.500"/></svg>
<div style="left:106px;top:335px;width:4px;height:1px;background:#6a6e72;"></div>
<div style="left:130px;top:349px;width:384px;height:26px;background:#232629;"></div>
<svg style="left:133px;top:354px;" width="16" height="16" viewBox="0 0 16 16"><path fill="none" stroke="#fcfcfc" stroke-width="1.2" d="M2.600 2v11.400H14M2.600 7.500h1.500L8 3.500L10 5L13.500 2.500M4 7.500L8.500 11L10 9.500L13.500 13.400"/></svg>
<div class="t" style="left:155px;top:353px;font-size:13.7px;line-height:19px;color:#fcfcfc;">Signal with noise</div>
<div style="left:369px;top:349px;width:145px;height:26px;overflow:hidden;"><div class="t" style="left:0px;top:4px;font-size:13.7px;line-height:19px;color:#fcfcfc;">CartesianPlot</div></div>
<svg style="left:114px;top:356px;" width="12" height="12" viewBox="0 0 12 12"><path fill="none" stroke="#c4c6c8" stroke-width="1.1" d="M1 3.500L6 8.500L11 3.500"/></svg>
<div style="left:126px;top:361px;width:4px;height:1px;background:#6a6e72;"></div>
<svg style="left:153px;top:380px;" width="16" height="16" viewBox="0 0 16 16"><path fill="none" stroke="#fcfcfc" stroke-width="1" d="M3.500 2v12M2 12.500h12M6.500 12.500v-1.500M9 12.500v-1.500M11.500 12.500v-1.500"/></svg>
<div class="t" style="left:175px;top:379px;font-size:13.7px;line-height:19px;color:#fcfcfc;">x</div>
<div style="left:369px;top:375px;width:145px;height:26px;overflow:hidden;"><div class="t" style="left:0px;top:4px;font-size:13.7px;line-height:19px;color:#fcfcfc;">Axis</div></div>
<div style="left:140px;top:387px;width:10px;height:1px;background:#6a6e72;"></div>
<div style="left:150px;top:401px;width:364px;height:26px;background:#232629;"></div>
<svg style="left:153px;top:406px;" width="16" height="16" viewBox="0 0 16 16"><path fill="none" stroke="#fcfcfc" stroke-width="1" d="M3.500 2v12M2 12.500h12M6.500 12.500v-1.500M9 12.500v-1.500M11.500 12.500v-1.500"/></svg>
<div class="t" style="left:175px;top:405px;font-size:13.7px;line-height:19px;color:#fcfcfc;">x2</div>
<div style="left:369px;top:401px;width:145px;height:26px;overflow:hidden;"><div class="t" style="left:0px;top:4px;font-size:13.7px;line-height:19px;color:#fcfcfc;">Axis</div></div>
<div style="left:140px;top:413px;width:10px;height:1px;background:#6a6e72;"></div>
<svg style="left:153px;top:432px;" width="16" height="16" viewBox="0 0 16 16"><path fill="none" stroke="#fcfcfc" stroke-width="1" d="M3.500 2v12M2 12.500h12M3.500 2.500h1.500M3.500 5h1.500M3.500 7.500h1.500"/></svg>
<div class="t" style="left:175px;top:431px;font-size:13.7px;line-height:19px;color:#fcfcfc;">y</div>
<div style="left:369px;top:427px;width:145px;height:26px;overflow:hidden;"><div class="t" style="left:0px;top:4px;font-size:13.7px;line-height:19px;color:#fcfcfc;">Axis</div></div>
<div style="left:140px;top:439px;width:10px;height:1px;background:#6a6e72;"></div>
<div style="left:150px;top:453px;width:364px;height:26px;background:#232629;"></div>
<svg style="left:153px;top:458px;" width="16" height="16" viewBox="0 0 16 16"><path fill="none" stroke="#fcfcfc" stroke-width="1" d="M3.500 2v12M2 12.500h12M3.500 2.500h1.500M3.500 5h1.500M3.500 7.500h1.500"/></svg>
<div class="t" style="left:175px;top:457px;font-size:13.7px;line-height:19px;color:#fcfcfc;">y2</div>
<div style="left:369px;top:453px;width:145px;height:26px;overflow:hidden;"><div class="t" style="left:0px;top:4px;font-size:13.7px;line-height:19px;color:#fcfcfc;">Axis</div></div>
<div style="left:140px;top:465px;width:10px;height:1px;background:#6a6e72;"></div>
<svg style="left:153px;top:484px;" width="16" height="16" viewBox="0 0 16 16"><path fill="none" stroke="#fcfcfc" stroke-width="1" d="M3.500 2v12M2 12.500h12M4 4l4 5Q10 12 13.500 12M4 12l4.500 -4L12.500 2.500"/></svg>
<div class="t" style="left:175px;top:483px;font-size:13.7px;line-height:19px;color:#fcfcfc;">signal</div>
<div style="left:369px;top:479px;width:145px;height:26px;overflow:hidden;"><div class="t" style="left:0px;top:4px;font-size:13.7px;line-height:19px;color:#fcfcfc;">XYCurve</div></div>
<div style="left:140px;top:491px;width:10px;height:1px;background:#6a6e72;"></div>
<div style="left:130px;top:505px;width:384px;height:26px;background:#232629;"></div>
<svg style="left:133px;top:510px;" width="16" height="16" viewBox="0 0 16 16"><path fill="none" stroke="#fcfcfc" stroke-width="1.2" d="M2.600 2v11.400H14M2.600 7.500h1.500L8 3.500L10 5L13.500 2.500M4 7.500L8.500 11L10 9.500L13.500 13.400"/></svg>
<div class="t" style="left:155px;top:509px;font-size:13.7px;line-height:19px;color:#fcfcfc;">FFT</div>
<div style="left:369px;top:505px;width:145px;height:26px;overflow:hidden;"><div class="t" style="left:0px;top:4px;font-size:13.7px;line-height:19px;color:#fcfcfc;">CartesianPlot</div></div>
<svg style="left:114px;top:512px;" width="12" height="12" viewBox="0 0 12 12"><path fill="none" stroke="#c4c6c8" stroke-width="1.1" d="M1 3.500L6 8.500L11 3.500"/></svg>
<div style="left:126px;top:517px;width:4px;height:1px;background:#6a6e72;"></div>
<svg style="left:153px;top:536px;" width="16" height="16" viewBox="0 0 16 16"><path fill="none" stroke="#fcfcfc" stroke-width="1" d="M3.500 2v12M2 12.500h12M6.500 12.500v-1.500M9 12.500v-1.500M11.500 12.500v-1.500"/></svg>
<div class="t" style="left:175px;top:535px;font-size:13.7px;line-height:19px;color:#fcfcfc;">x</div>
<div style="left:369px;top:531px;width:145px;height:26px;overflow:hidden;"><div class="t" style="left:0px;top:4px;font-size:13.7px;line-height:19px;color:#fcfcfc;">Axis</div></div>
<div style="left:140px;top:543px;width:10px;height:1px;background:#6a6e72;"></div>
<div style="left:150px;top:557px;width:364px;height:26px;background:#232629;"></div>
<svg style="left:153px;top:562px;" width="16" height="16" viewBox="0 0 16 16"><path fill="none" stroke="#fcfcfc" stroke-width="1" d="M3.500 2v12M2 12.500h12M6.500 12.500v-1.500M9 12.500v-1.500M11.500 12.500v-1.500"/></svg>
<div class="t" style="left:175px;top:561px;font-size:13.7px;line-height:19px;color:#fcfcfc;">x2</div>
<div style="left:369px;top:557px;width:145px;height:26px;overflow:hidden;"><div class="t" style="left:0px;top:4px;font-size:13.7px;line-height:19px;color:#fcfcfc;">Axis</div></div>
<div style="left:140px;top:569px;width:10px;height:1px;background:#6a6e72;"></div>
<svg style="left:153px;top:588px;" width="16" height="16" viewBox="0 0 16 16"><path fill="none" stroke="#fcfcfc" stroke-width="1" d="M3.500 2v12M2 12.500h12M3.500 2.500h1.500M3.500 5h1.500M3.500 7.500h1.500"/></svg>
<div class="t" style="left:175px;top:587px;font-size:13.7px;line-height:19px;color:#fcfcfc;">y</div>
<div style="left:369px;top:583px;width:145px;height:26px;overflow:hidden;"><div class="t" style="left:0px;top:4px;font-size:13.7px;line-height:19px;color:#fcfcfc;">Axis</div></div>
<div style="left:140px;top:595px;width:10px;height:1px;background:#6a6e72;"></div>
<div style="left:150px;top:609px;width:364px;height:26px;background:#232629;"></div>
<svg style="left:153px;top:614px;" width="16" height="16" viewBox="0 0 16 16"><path fill="none" stroke="#fcfcfc" stroke-width="1" d="M3.500 2v12M2 12.500h12M3.500 2.500h1.500M3.500 5h1.500M3.500 7.500h1.500"/></svg>
<div class="t" style="left:175px;top:613px;font-size:13.7px;line-height:19px;color:#fcfcfc;">y2</div>
<div style="left:369px;top:609px;width:145px;height:26px;overflow:hidden;"><div class="t" style="left:0px;top:4px;font-size:13.7px;line-height:19px;color:#fcfcfc;">Axis</div></div>
<div style="left:140px;top:621px;width:10px;height:1px;background:#6a6e72;"></div>
<div style="left:150px;top:635px;width:364px;height:26px;background:#20485f;"></div>
<svg style="left:153px;top:640px;" width="16" height="16" viewBox="0 0 16 16"><path fill="none" stroke="#fcfcfc" stroke-width="1" d="M2.500 14V3.500H9.500V9.500H14.500V13.500H9.500V9.500M2.500 8.500h7"/><path fill="none" stroke="#fcfcfc" stroke-width="0.8" d="M3 8q1.500 -9 3.500 -4t3 0M10 11q2 4 4 0"/></svg>
<div class="t" style="left:175px;top:639px;font-size:13.7px;line-height:19px;color:#fcfcfc;">Fourier transform</div>
<div style="left:369px;top:635px;width:145px;height:26px;overflow:hidden;"><div class="t" style="left:0px;top:4px;font-size:13.7px;line-height:19px;color:#fcfcfc;">XYFourierTransformCurve</div></div>
<div style="left:140px;top:647px;width:10px;height:1px;background:#6a6e72;"></div>
<div style="left:130px;top:661px;width:384px;height:26px;background:#232629;"></div>
<svg style="left:133px;top:666px;" width="16" height="16" viewBox="0 0 16 16"><path fill="none" stroke="#fcfcfc" stroke-width="1.2" d="M2.600 2v11.400H14M2.600 7.500h1.500L8 3.500L10 5L13.500 2.500M4 7.500L8.500 11L10 9.500L13.500 13.400"/></svg>
<div class="t" style="left:155px;top:665px;font-size:13.7px;line-height:19px;color:#fcfcfc;">Signal after Fourier Filter</div>
<div style="left:369px;top:661px;width:145px;height:26px;overflow:hidden;"><div class="t" style="left:0px;top:4px;font-size:13.7px;line-height:19px;color:#fcfcfc;">CartesianPlot</div></div>
<svg style="left:114px;top:668px;" width="12" height="12" viewBox="0 0 12 12"><path fill="none" stroke="#c4c6c8" stroke-width="1.1" d="M1 3.500L6 8.500L11 3.500"/></svg>
<div style="left:126px;top:673px;width:4px;height:1px;background:#6a6e72;"></div>
<svg style="left:153px;top:692px;" width="16" height="16" viewBox="0 0 16 16"><path fill="none" stroke="#fcfcfc" stroke-width="1" d="M3.500 2v12M2 12.500h12M6.500 12.500v-1.500M9 12.500v-1.500M11.500 12.500v-1.500"/></svg>
<div class="t" style="left:175px;top:691px;font-size:13.7px;line-height:19px;color:#fcfcfc;">x</div>
<div style="left:369px;top:687px;width:145px;height:26px;overflow:hidden;"><div class="t" style="left:0px;top:4px;font-size:13.7px;line-height:19px;color:#fcfcfc;">Axis</div></div>
<div style="left:140px;top:699px;width:10px;height:1px;background:#6a6e72;"></div>
<div style="left:150px;top:713px;width:364px;height:26px;background:#232629;"></div>
<svg style="left:153px;top:718px;" width="16" height="16" viewBox="0 0 16 16"><path fill="none" stroke="#fcfcfc" stroke-width="1" d="M3.500 2v12M2 12.500h12M6.500 12.500v-1.500M9 12.500v-1.500M11.500 12.500v-1.500"/></svg>
<div class="t" style="left:175px;top:717px;font-size:13.7px;line-height:19px;color:#fcfcfc;">x2</div>
<div style="left:369px;top:713px;width:145px;height:26px;overflow:hidden;"><div class="t" style="left:0px;top:4px;font-size:13.7px;line-height:19px;color:#fcfcfc;">Axis</div></div>
<div style="left:140px;top:725px;width:10px;height:1px;background:#6a6e72;"></div>
<svg style="left:153px;top:744px;" width="16" height="16" viewBox="0 0 16 16"><path fill="none" stroke="#fcfcfc" stroke-width="1" d="M3.500 2v12M2 12.500h12M3.500 2.500h1.500M3.500 5h1.500M3.500 7.500h1.500"/></svg>
<div class="t" style="left:175px;top:743px;font-size:13.7px;line-height:19px;color:#fcfcfc;">y</div>
<div style="left:369px;top:739px;width:145px;height:26px;overflow:hidden;"><div class="t" style="left:0px;top:4px;font-size:13.7px;line-height:19px;color:#fcfcfc;">Axis</div></div>
<div style="left:140px;top:751px;width:10px;height:1px;background:#6a6e72;"></div>
<div style="left:150px;top:765px;width:364px;height:26px;background:#232629;"></div>
<svg style="left:153px;top:770px;" width="16" height="16" viewBox="0 0 16 16"><path fill="none" stroke="#fcfcfc" stroke-width="1" d="M3.500 2v12M2 12.500h12M3.500 2.500h1.500M3.500 5h1.500M3.500 7.500h1.500"/></svg>
<div class="t" style="left:175px;top:769px;font-size:13.7px;line-height:19px;color:#fcfcfc;">y2</div>
<div style="left:369px;top:765px;width:145px;height:26px;overflow:hidden;"><div class="t" style="left:0px;top:4px;font-size:13.7px;line-height:19px;color:#fcfcfc;">Axis</div></div>
<div style="left:140px;top:777px;width:10px;height:1px;background:#6a6e72;"></div>
<svg style="left:153px;top:796px;" width="16" height="16" viewBox="0 0 16 16"><path fill="none" stroke="#fcfcfc" stroke-width="1" d="M2.500 5V2.500H5M11 2.500h2.500V5M13.500 11v2.500H11M5 13.500H2.500V11M8 2v12M2 10.500h12"/><path fill="none" stroke="#3daee9" stroke-width="1" d="M4.500 10Q5 4 8 4T11.500 10"/></svg>
<div class="t" style="left:175px;top:795px;font-size:13.7px;line-height:19px;color:#fcfcfc;">Fourier filter</div>
<div style="left:369px;top:791px;width:145px;height:26px;overflow:hidden;"><div class="t" style="left:0px;top:4px;font-size:13.7px;line-height:19px;color:#fcfcfc;">XYFourierFilterCurve</div></div>
<div style="left:140px;top:803px;width:10px;height:1px;background:#6a6e72;"></div>
<div style="left:130px;top:817px;width:384px;height:26px;background:#232629;"></div>
<svg style="left:133px;top:822px;" width="16" height="16" viewBox="0 0 16 16"><path fill="none" stroke="#fcfcfc" stroke-width="1.2" d="M3.500 3.500h9v9h-9z"/><path fill="#fcfcfc" d="M5.500 5.500h5v1.600H8.800V11H7.200V7.100H5.500z"/><path fill="#fcfcfc" d="M2.0 2.0h2.600v2.600h-2.600z"/><path fill="#fcfcfc" d="M11.4 2.0h2.600v2.600h-2.600z"/><path fill="#fcfcfc" d="M2.0 11.4h2.600v2.600h-2.600z"/><path fill="#fcfcfc" d="M11.4 11.4h2.600v2.600h-2.600z"/></svg>
<div class="t" style="left:155px;top:821px;font-size:13.7px;line-height:19px;color:#fcfcfc;">Signal Info</div>
<div style="left:369px;top:817px;width:145px;height:26px;overflow:hidden;"><div class="t" style="left:0px;top:4px;font-size:13.7px;line-height:19px;color:#fcfcfc;">TextLabel</div></div>
<div style="left:120px;top:829px;width:10px;height:1px;background:#6a6e72;"></div>
<svg style="left:133px;top:848px;" width="16" height="16" viewBox="0 0 16 16"><path fill="none" stroke="#fcfcfc" stroke-width="1.2" d="M3.500 3.500h9v9h-9z"/><path fill="#fcfcfc" d="M5.500 5.500h5v1.600H8.800V11H7.200V7.100H5.500z"/><path fill="#fcfcfc" d="M2.0 2.0h2.600v2.600h-2.600z"/><path fill="#fcfcfc" d="M11.4 2.0h2.600v2.600h-2.600z"/><path fill="#fcfcfc" d="M2.0 11.4h2.600v2.600h-2.600z"/><path fill="#fcfcfc" d="M11.4 11.4h2.600v2.600h-2.600z"/></svg>
<div class="t" style="left:155px;top:847px;font-size:13.7px;line-height:19px;color:#fcfcfc;">FFT Info</div>
<div style="left:369px;top:843px;width:145px;height:26px;overflow:hidden;"><div class="t" style="left:0px;top:4px;font-size:13.7px;line-height:19px;color:#fcfcfc;">TextLabel</div></div>
<div style="left:120px;top:855px;width:10px;height:1px;background:#6a6e72;"></div>
<div style="left:130px;top:869px;width:384px;height:26px;background:#232629;"></div>
<svg style="left:133px;top:874px;" width="16" height="16" viewBox="0 0 16 16"><path fill="none" stroke="#fcfcfc" stroke-width="1.2" d="M3.500 3.500h9v9h-9z"/><path fill="#fcfcfc" d="M5.500 5.500h5v1.600H8.800V11H7.200V7.100H5.500z"/><path fill="#fcfcfc" d="M2.0 2.0h2.600v2.600h-2.600z"/><path fill="#fcfcfc" d="M11.4 2.0h2.600v2.600h-2.600z"/><path fill="#fcfcfc" d="M2.0 11.4h2.600v2.600h-2.600z"/><path fill="#fcfcfc" d="M11.4 11.4h2.600v2.600h-2.600z"/></svg>
<div class="t" style="left:155px;top:873px;font-size:13.7px;line-height:19px;color:#fcfcfc;">Fourier Filter Info</div>
<div style="left:369px;top:869px;width:145px;height:26px;overflow:hidden;"><div class="t" style="left:0px;top:4px;font-size:13.7px;line-height:19px;color:#fcfcfc;">TextLabel</div></div>
<div style="left:120px;top:881px;width:10px;height:1px;background:#6a6e72;"></div>
<div style="left:79px;top:219px;width:1px;height:6px;background:#6a6e72;"></div>
<div style="left:99px;top:245px;width:1px;height:6px;background:#6a6e72;"></div>
<div style="left:99px;top:264px;width:1px;height:65px;background:#6a6e72;"></div>
<div style="left:119px;top:271px;width:1px;height:39px;background:#6a6e72;"></div>
<div style="left:119px;top:349px;width:1px;height:6px;background:#6a6e72;"></div>
<div style="left:119px;top:369px;width:1px;height:142px;background:#6a6e72;"></div>
<div style="left:119px;top:525px;width:1px;height:142px;background:#6a6e72;"></div>
<div style="left:119px;top:681px;width:1px;height:201px;background:#6a6e72;"></div>
<div style="left:139px;top:375px;width:1px;height:117px;background:#6a6e72;"></div>
<div style="left:139px;top:531px;width:1px;height:117px;background:#6a6e72;"></div>
<div style="left:139px;top:687px;width:1px;height:117px;background:#6a6e72;"></div>
<div style="left:70px;top:1137px;width:444px;height:1px;background:#2c3034;"></div>
<div style="left:75px;top:1143px;width:65px;height:10px;background:#5a5f63;border:1px solid #6f7478;border-radius:5px;"></div>
<div style="left:520px;top:126px;width:991px;height:1035px;border:1px solid #3daee9;border-radius:3px;background:#2a2e32;"></div>
<div style="left:552px;top:180px;width:925px;height:925px;background:#fff;"></div>
<div style="left:570px;top:198px;width:408px;height:285px;border:1px solid #6a6a6a;background:#fff;"></div>
<svg style="left:625px;top:254px;" width="298" height="172.7" viewBox="0 0 298 172.7"><g transform="translate(1,0)"><line x1="74.00" y1="0" x2="74.00" y2="172.7" stroke="#e2e2e2" stroke-width="1.6"/><line x1="148.00" y1="0" x2="148.00" y2="172.7" stroke="#e2e2e2" stroke-width="1.6"/><line x1="222.00" y1="0" x2="222.00" y2="172.7" stroke="#e2e2e2" stroke-width="1.6"/><line x1="0" y1="43.17" x2="296" y2="43.17" stroke="#e2e2e2" stroke-width="1.6"/><line x1="0" y1="86.35" x2="296" y2="86.35" stroke="#e2e2e2" stroke-width="1.6"/><line x1="0" y1="129.52" x2="296" y2="129.52" stroke="#e2e2e2" stroke-width="1.6"/><line x1="37.00" y1="0" x2="37.00" y2="172.7" stroke="#d8d8d8" stroke-width="1" stroke-dasharray="1 2"/><line x1="111.00" y1="0" x2="111.00" y2="172.7" stroke="#d8d8d8" stroke-width="1" stroke-dasharray="1 2"/><line x1="185.00" y1="0" x2="185.00" y2="172.7" stroke="#d8d8d8" stroke-width="1" stroke-dasharray="1 2"/><line x1="259.00" y1="0" x2="259.00" y2="172.7" stroke="#d8d8d8" stroke-width="1" stroke-dasharray="1 2"/><line x1="0" y1="21.59" x2="296" y2="21.59" stroke="#d8d8d8" stroke-width="1" stroke-dasharray="1 2"/><line x1="0" y1="64.76" x2="296" y2="64.76" stroke="#d8d8d8" stroke-width="1" stroke-dasharray="1 2"/><line x1="0" y1="107.94" x2="296" y2="107.94" stroke="#d8d8d8" stroke-width="1" stroke-dasharray="1 2"/><line x1="0" y1="151.11" x2="296" y2="151.11" stroke="#d8d8d8" stroke-width="1" stroke-dasharray="1 2"/><rect x="0" y="43" width="281" height="86" fill="#0000ff"/><path d="M0.5 39.3V135.4M1.5 26.6V133.7M2.5 30.0V143.4M3.5 38.9V134.6M4.5 29.6V132.8M5.5 35.7V133.7M6.5 40.3V137.4M7.5 31.6V134.4M8.5 34.7V135.5M9.5 28.6V148.4M10.5 22.9V134.9M11.5 34.8V135.5M12.5 32.4V142.5M13.5 24.7V134.8M14.5 32.0V133.0M15.5 35.8V143.5M16.5 31.4V133.9M17.5 38.2V134.5M18.5 25.9V133.7M19.5 25.2V134.4M20.5 34.4V139.7M21.5 38.7V136.1M22.5 39.8V149.9M23.5 34.1V134.0M24.5 39.5V136.2M25.5 32.7V136.9M26.5 35.2V142.2M27.5 38.4V134.7M28.5 36.1V138.7M29.5 28.9V137.4M30.5 40.5V138.8M31.5 28.2V139.0M32.5 29.3V132.4M33.5 30.3V136.0M34.5 30.8V136.2M35.5 33.3V134.5M36.5 26.5V137.8M37.5 32.3V136.4M38.5 28.4V143.5M39.5 37.3V156.6M40.5 39.8V132.5M41.5 37.9V132.6M42.5 30.8V138.4M43.5 31.7V135.6M44.5 39.5V134.0M45.5 35.5V137.8M46.5 16.3V158.4M47.5 37.0V133.4M48.5 37.7V137.7M49.5 36.6V137.1M50.5 39.5V134.4M51.5 37.3V133.0M52.5 35.5V133.3M53.5 40.3V132.1M54.5 40.0V140.6M55.5 32.3V148.7M56.5 33.6V139.7M57.5 37.0V139.7M58.5 39.0V134.4M59.5 29.4V132.3M60.5 40.9V134.6M61.5 35.5V137.1M62.5 40.7V150.0M63.5 37.5V141.2M64.5 35.3V149.1M65.5 40.4V136.5M66.5 32.9V141.0M67.5 40.4V132.2M68.5 40.7V132.4M69.5 39.4V138.2M70.5 38.1V133.0M71.5 38.6V137.9M72.5 15.1V135.2M73.5 26.8V136.6M74.5 40.3V141.5M75.5 34.6V136.3M76.5 26.4V135.3M77.5 35.2V135.6M78.5 35.5V137.5M79.5 25.8V144.4M80.5 20.9V133.5M81.5 40.9V135.2M82.5 40.3V139.2M83.5 39.8V135.3M84.5 35.4V145.7M85.5 32.7V142.7M86.5 33.4V133.1M87.5 35.2V133.3M88.5 36.2V148.6M89.5 33.7V134.3M90.5 37.4V142.1M91.5 33.1V139.1M92.5 16.0V134.0M93.5 37.7V133.0M94.5 33.9V134.3M95.5 30.9V145.7M96.5 40.7V146.0M97.5 22.6V136.8M98.5 40.2V139.4M99.5 37.2V133.9M100.5 38.3V137.7M101.5 32.9V133.8M102.5 34.7V136.4M103.5 40.8V144.6M104.5 40.6V136.4M105.5 24.9V144.4M106.5 29.1V144.3M107.5 32.5V133.5M108.5 38.1V133.1M109.5 40.7V151.6M110.5 39.3V143.9M111.5 39.1V134.3M112.5 37.7V139.8M113.5 22.2V136.4M114.5 23.6V133.0M115.5 35.7V137.7M116.5 35.2V148.0M117.5 35.2V135.0M118.5 30.6V139.2M119.5 37.4V149.3M120.5 39.2V134.8M121.5 32.5V150.9M122.5 40.0V143.3M123.5 35.1V135.9M124.5 38.8V132.2M125.5 39.6V143.9M126.5 26.3V146.6M127.5 39.5V135.4M128.5 36.9V133.0M129.5 35.0V137.4M130.5 24.8V144.6M131.5 33.9V140.6M132.5 29.0V146.4M133.5 35.8V136.7M134.5 34.9V132.2M135.5 35.7V137.3M136.5 33.1V155.1M137.5 36.7V137.7M138.5 20.4V148.4M139.5 38.2V140.5M140.5 28.0V153.6M141.5 40.6V139.2M142.5 36.7V143.9M143.5 40.0V141.3M144.5 40.3V147.7M145.5 34.2V139.4M146.5 31.3V136.1M147.5 40.0V133.3M148.5 37.7V154.8M149.5 17.4V144.5M150.5 39.6V133.2M151.5 16.2V133.8M152.5 39.6V138.2M153.5 35.0V135.7M154.5 30.8V156.0M155.5 29.4V132.7M156.5 40.0V136.5M157.5 37.2V142.9M158.5 39.8V133.0M159.5 40.2V139.3M160.5 34.0V142.4M161.5 35.9V137.2M162.5 38.8V135.2M163.5 30.6V133.7M164.5 40.2V139.0M165.5 31.7V138.9M166.5 32.1V138.1M167.5 38.6V145.2M168.5 25.5V140.5M169.5 34.6V135.4M170.5 39.8V151.9M171.5 33.6V135.0M172.5 37.2V139.0M173.5 14.3V145.1M174.5 39.0V137.8M175.5 38.9V138.2M176.5 36.6V133.9M177.5 38.7V139.9M178.5 40.8V138.9M179.5 34.1V133.0M180.5 19.2V144.5M181.5 38.2V136.2M182.5 31.5V138.6M183.5 38.0V144.1M184.5 36.2V133.8M185.5 33.3V149.9M186.5 34.6V142.8M187.5 32.2V133.7M188.5 39.6V133.1M189.5 30.0V133.9M190.5 37.8V137.9M191.5 38.2V137.0M192.5 24.4V146.4M193.5 34.7V141.7M194.5 39.1V136.2M195.5 38.7V146.3M196.5 38.8V138.5M197.5 14.7V132.9M198.5 24.1V139.0M199.5 40.3V132.2M200.5 30.7V133.2M201.5 19.9V140.4M202.5 24.2V134.4M203.5 40.4V147.2M204.5 39.3V135.3M205.5 37.4V147.3M206.5 38.2V137.2M207.5 36.1V153.7M208.5 33.3V153.4M209.5 36.3V134.4M210.5 30.0V135.9M211.5 36.6V133.0M212.5 40.3V136.8M213.5 39.4V136.0M214.5 39.8V133.7M215.5 36.1V154.8M216.5 36.3V134.2M217.5 40.9V141.0M218.5 25.8V136.2M219.5 40.6V140.4M220.5 21.3V136.4M221.5 39.9V133.8M222.5 40.5V147.4M223.5 40.8V158.2M224.5 40.3V133.7M225.5 38.2V133.0M226.5 31.9V149.1M227.5 37.4V135.8M228.5 35.3V132.4M229.5 39.2V139.3M230.5 38.3V149.3M231.5 29.2V150.5M232.5 27.8V137.7M233.5 25.7V134.6M234.5 37.8V159.5M235.5 8.3V136.1M236.5 37.4V135.8M237.5 33.1V132.3M238.5 36.5V159.1M239.5 33.0V132.8M240.5 12.1V144.0M241.5 31.0V133.5M242.5 35.7V132.1M243.5 31.3V136.8M244.5 34.5V133.1M245.5 29.3V133.5M246.5 36.4V134.1M247.5 39.6V132.1M248.5 16.1V141.0M249.5 32.9V136.2M250.5 39.0V134.7M251.5 39.0V134.8M252.5 29.1V135.6M253.5 32.4V134.7M254.5 40.1V132.6M255.5 35.5V150.3M256.5 35.6V136.6M257.5 37.8V137.3M258.5 40.5V143.0M259.5 29.9V132.4M260.5 34.8V138.4M261.5 34.9V134.3M262.5 39.7V153.9M263.5 32.3V146.0M264.5 26.4V132.3M265.5 36.3V136.0M266.5 36.3V136.7M267.5 25.6V147.3M268.5 37.4V139.0M269.5 37.6V133.9M270.5 36.1V147.6M271.5 40.7V132.6M272.5 36.1V133.8M273.5 34.9V141.2M274.5 23.7V134.3M275.5 40.6V135.0M276.5 34.3V137.5M277.5 37.5V136.6M278.5 36.3V133.6M279.5 39.7V136.8M280.5 34.9V145.5" stroke="#0000ff" stroke-width="1" fill="none"/><line x1="0.00" y1="0" x2="0.00" y2="8" stroke="#666666" stroke-width="1.500"/><line x1="0.00" y1="172.7" x2="0.00" y2="164.7" stroke="#666666" stroke-width="1.500"/><line x1="37.00" y1="0" x2="37.00" y2="5" stroke="#666666" stroke-width="1.500"/><line x1="37.00" y1="172.7" x2="37.00" y2="167.7" stroke="#666666" stroke-width="1.500"/><line x1="74.00" y1="0" x2="74.00" y2="8" stroke="#666666" stroke-width="1.500"/><line x1="74.00" y1="172.7" x2="74.00" y2="164.7" stroke="#666666" stroke-width="1.500"/><line x1="111.00" y1="0" x2="111.00" y2="5" stroke="#666666" stroke-width="1.500"/><line x1="111.00" y1="172.7" x2="111.00" y2="167.7" stroke="#666666" stroke-width="1.500"/><line x1="148.00" y1="0" x2="148.00" y2="8" stroke="#666666" stroke-width="1.500"/><line x1="148.00" y1="172.7" x2="148.00" y2="164.7" stroke="#666666" stroke-width="1.500"/><line x1="185.00" y1="0" x2="185.00" y2="5" stroke="#666666" stroke-width="1.500"/><line x1="185.00" y1="172.7" x2="185.00" y2="167.7" stroke="#666666" stroke-width="1.500"/><line x1="222.00" y1="0" x2="222.00" y2="8" stroke="#666666" stroke-width="1.500"/><line x1="222.00" y1="172.7" x2="222.00" y2="164.7" stroke="#666666" stroke-width="1.500"/><line x1="259.00" y1="0" x2="259.00" y2="5" stroke="#666666" stroke-width="1.500"/><line x1="259.00" y1="172.7" x2="259.00" y2="167.7" stroke="#666666" stroke-width="1.500"/><line x1="296.00" y1="0" x2="296.00" y2="8" stroke="#666666" stroke-width="1.500"/><line x1="296.00" y1="172.7" x2="296.00" y2="164.7" stroke="#666666" stroke-width="1.500"/><line x1="0" y1="0.00" x2="8" y2="0.00" stroke="#666666" stroke-width="1.500"/><line x1="296" y1="0.00" x2="288" y2="0.00" stroke="#666666" stroke-width="1.500"/><line x1="0" y1="21.59" x2="5" y2="21.59" stroke="#666666" stroke-width="1.500"/><line x1="296" y1="21.59" x2="291" y2="21.59" stroke="#666666" stroke-width="1.500"/><line x1="0" y1="43.17" x2="8" y2="43.17" stroke="#666666" stroke-width="1.500"/><line x1="296" y1="43.17" x2="288" y2="43.17" stroke="#666666" stroke-width="1.500"/><line x1="0" y1="64.76" x2="5" y2="64.76" stroke="#666666" stroke-width="1.500"/><line x1="296" y1="64.76" x2="291" y2="64.76" stroke="#666666" stroke-width="1.500"/><line x1="0" y1="86.35" x2="8" y2="86.35" stroke="#666666" stroke-width="1.500"/><line x1="296" y1="86.35" x2="288" y2="86.35" stroke="#666666" stroke-width="1.500"/><line x1="0" y1="107.94" x2="5" y2="107.94" stroke="#666666" stroke-width="1.500"/><line x1="296" y1="107.94" x2="291" y2="107.94" stroke="#666666" stroke-width="1.500"/><line x1="0" y1="129.52" x2="8" y2="129.52" stroke="#666666" stroke-width="1.500"/><line x1="296" y1="129.52" x2="288" y2="129.52" stroke="#666666" stroke-width="1.500"/><line x1="0" y1="151.11" x2="5" y2="151.11" stroke="#666666" stroke-width="1.500"/><line x1="296" y1="151.11" x2="291" y2="151.11" stroke="#666666" stroke-width="1.500"/><line x1="0" y1="172.70" x2="8" y2="172.70" stroke="#666666" stroke-width="1.500"/><line x1="296" y1="172.70" x2="288" y2="172.70" stroke="#666666" stroke-width="1.500"/><rect x="0" y="0" width="296" height="172.7" fill="none" stroke="#666666" stroke-width="1.500"/></g></svg>
<div class="t" style="left:126.0px;width:1000px;text-align:center;top:436px;font-size:12.6px;line-height:18px;color:#626262;">0</div>
<div class="t" style="left:200.0px;width:1000px;text-align:center;top:436px;font-size:12.6px;line-height:18px;color:#626262;">2</div>
<div class="t" style="left:274.0px;width:1000px;text-align:center;top:436px;font-size:12.6px;line-height:18px;color:#626262;">4</div>
<div class="t" style="left:348.0px;width:1000px;text-align:center;top:436px;font-size:12.6px;line-height:18px;color:#626262;">6</div>
<div class="t" style="left:422.0px;width:1000px;text-align:center;top:436px;font-size:12.6px;line-height:18px;color:#626262;">8</div>
<div class="t" style="left:-380.5px;width:1000px;text-align:right;top:248px;font-size:12.6px;line-height:18px;color:#626262;">20</div>
<div class="t" style="left:-380.5px;width:1000px;text-align:right;top:291px;font-size:12.6px;line-height:18px;color:#626262;">10</div>
<div class="t" style="left:-380.5px;width:1000px;text-align:right;top:334px;font-size:12.6px;line-height:18px;color:#626262;">0</div>
<div class="t" style="left:-380.5px;width:1000px;text-align:right;top:378px;font-size:12.6px;line-height:18px;color:#626262;">-10</div>
<div class="t" style="left:-380.5px;width:1000px;text-align:right;top:421px;font-size:12.6px;line-height:18px;color:#626262;">-20</div>
<div class="t" style="left:274px;width:1000px;text-align:center;top:204px;font-size:17.6px;line-height:24px;color:#626262;">Signal with white noise</div>
<div class="t" style="left:277px;width:1000px;text-align:center;top:459px;font-size:17.6px;line-height:24px;color:#626262;">t</div>
<div class="t" style="left:-82.5px;width:1000px;text-align:right;top:456px;font-size:12.6px;line-height:18px;color:#626262;">×10000</div>
<div class="t" style="left:486px;top:326px;width:200px;height:24px;line-height:24px;text-align:center;font-size:17.600px;color:#626262;transform:rotate(-90deg);">signal</div>
<div style="left:570px;top:500px;width:408px;height:285px;border:1px solid #6a6a6a;background:#fff;"></div>
<svg style="left:625px;top:556px;" width="298" height="172.7" viewBox="0 0 298 172.7"><g transform="translate(1,0)"><line x1="59.20" y1="0" x2="59.20" y2="172.7" stroke="#cfcfcf" stroke-width="1"/><line x1="118.40" y1="0" x2="118.40" y2="172.7" stroke="#cfcfcf" stroke-width="1"/><line x1="177.60" y1="0" x2="177.60" y2="172.7" stroke="#cfcfcf" stroke-width="1"/><line x1="236.80" y1="0" x2="236.80" y2="172.7" stroke="#cfcfcf" stroke-width="1"/><line x1="0" y1="57.57" x2="296" y2="57.57" stroke="#cfcfcf" stroke-width="1"/><line x1="0" y1="115.13" x2="296" y2="115.13" stroke="#cfcfcf" stroke-width="1"/><line x1="29.60" y1="0" x2="29.60" y2="172.7" stroke="#d8d8d8" stroke-width="1" stroke-dasharray="1 2"/><line x1="88.80" y1="0" x2="88.80" y2="172.7" stroke="#d8d8d8" stroke-width="1" stroke-dasharray="1 2"/><line x1="148.00" y1="0" x2="148.00" y2="172.7" stroke="#d8d8d8" stroke-width="1" stroke-dasharray="1 2"/><line x1="207.20" y1="0" x2="207.20" y2="172.7" stroke="#d8d8d8" stroke-width="1" stroke-dasharray="1 2"/><line x1="266.40" y1="0" x2="266.40" y2="172.7" stroke="#d8d8d8" stroke-width="1" stroke-dasharray="1 2"/><line x1="0" y1="28.78" x2="296" y2="28.78" stroke="#d8d8d8" stroke-width="1" stroke-dasharray="1 2"/><line x1="0" y1="86.35" x2="296" y2="86.35" stroke="#d8d8d8" stroke-width="1" stroke-dasharray="1 2"/><line x1="0" y1="143.92" x2="296" y2="143.92" stroke="#d8d8d8" stroke-width="1" stroke-dasharray="1 2"/><path d="M0 172.7L0.0 153.7L0.9 152.2L1.8 150.4L2.7 153.0L3.6 153.4L4.5 152.7L5.4 152.0L6.3 151.9L7.2 152.5L8.1 151.9L9.0 152.2L9.9 153.3L10.8 153.3L11.7 151.2L12.6 153.4L13.5 148.8L14.4 153.6L15.3 150.6L16.2 151.7L17.1 151.8L18.0 153.4L18.9 151.5L19.8 150.6L20.7 151.6L21.6 148.4L22.5 150.6L23.4 149.0L24.3 153.7L25.2 151.1L26.1 151.1L27.0 150.4L27.9 151.5L28.8 148.1L29.7 152.3L30.6 152.3L31.5 151.8L32.4 153.7L33.3 149.2L34.2 153.2L35.1 152.7L36.0 151.4L36.9 153.1L37.8 150.2L38.7 151.6L39.6 151.8L40.5 149.7L41.4 153.6L42.3 151.2L43.2 149.3L44.1 153.7L45.0 149.3L45.9 150.0L46.8 150.6L47.7 151.1L48.6 153.7L49.5 152.7L50.4 153.6L51.3 143.9L52.2 149.0L53.1 151.3L54.0 152.1L54.9 146.4L55.8 151.2L56.7 152.5L57.6 153.7L58.5 153.0L59.4 153.5L60.3 150.8L61.2 149.0L62.1 153.2L63.0 153.1L63.9 151.8L64.8 152.9L65.7 152.2L66.6 148.6L67.5 151.9L68.4 152.7L69.3 152.9L70.2 152.5L71.1 151.0L72.0 152.1L72.9 151.0L73.8 153.1L74.7 152.7L75.6 153.5L76.5 152.9L77.4 150.1L78.3 151.3L79.2 151.3L80.1 152.6L81.0 153.7L81.9 152.7L82.8 152.7L83.7 153.3L84.6 147.2L85.5 151.0L86.4 150.0L87.3 149.8L88.2 148.9L89.1 152.4L90.0 153.3L90.9 152.3L91.8 152.5L92.7 153.1L93.6 153.6L94.5 151.7L95.4 152.8L96.3 151.7L97.2 149.0L98.1 152.2L99.0 152.2L99.9 150.4L100.8 151.0L101.7 153.6L102.6 152.9L103.5 153.2L104.4 146.4L105.3 151.6L106.2 147.3L107.1 150.3L108.0 153.1L108.9 151.3L109.8 151.3L110.7 153.5L111.6 151.5L112.5 150.0L113.4 153.0L114.3 151.3L115.2 153.4L116.1 152.8L117.0 148.7L117.9 152.8L118.8 150.6L119.7 148.6L120.6 152.2L121.5 152.5L122.4 150.4L123.3 153.3L124.2 153.3L125.1 153.3L126.0 152.8L126.9 153.4L127.8 151.6L128.7 152.5L129.6 152.8L130.5 153.0L131.4 152.6L132.3 153.4L133.2 151.4L134.1 152.1L135.0 152.1L135.9 149.5L136.8 152.9L137.7 149.9L138.6 151.8L139.5 151.5L140.4 148.4L141.3 144.0L142.2 152.6L143.1 152.8L144.0 153.5L144.9 150.0L145.8 153.4L146.7 153.4L147.6 152.6L148.5 150.3L149.4 150.3L150.3 150.5L151.2 152.7L152.1 152.7L153.0 153.4L153.9 150.2L154.8 151.1L155.7 151.0L156.6 146.9L157.5 152.9L158.4 149.7L159.3 150.3L160.2 152.8L161.1 151.4L162.0 148.4L162.9 153.4L163.8 151.9L164.7 153.1L165.6 150.8L166.5 150.0L167.4 148.8L168.3 148.5L169.2 149.0L170.1 151.4L171.0 152.3L171.9 150.5L172.8 151.3L173.7 150.0L174.6 153.0L175.5 153.1L176.4 149.1L177.3 151.8L178.2 150.7L179.1 153.1L180.0 150.7L180.9 150.2L181.8 153.0L182.7 153.6L183.6 153.4L184.5 151.9L185.4 151.1L186.3 152.5L187.2 150.8L188.1 153.1L189.0 153.2L189.9 150.5L190.8 152.9L191.7 149.7L192.6 152.9L193.5 151.9L194.4 150.4L195.3 153.5L196.2 153.0L197.1 153.3L198.0 151.1L198.9 153.5L199.8 153.5L200.7 146.4L201.6 151.3L202.5 153.0L203.4 153.3L204.3 153.0L205.2 153.3L206.1 150.8L207.0 148.8L207.9 152.3L208.8 151.5L209.7 153.5L210.6 153.1L211.5 153.1L212.4 151.3L213.3 151.9L214.2 153.2L215.1 152.2L216.0 150.0L216.9 150.9L217.8 153.1L218.7 142.9L219.6 152.2L220.5 152.2L221.4 149.1L222.3 152.6L223.2 153.2L224.1 151.7L225.0 150.8L225.9 148.5L226.8 150.6L227.7 152.8L228.6 152.3L229.5 147.2L230.4 143.3L231.3 151.0L232.2 153.2L233.1 152.8L234.0 153.6L234.9 152.7L235.8 150.7L236.7 153.0L237.6 152.0L238.5 152.5L239.4 152.8L240.3 149.9L241.2 152.8L242.1 147.4L243.0 148.3L243.9 149.4L244.8 151.5L245.7 150.4L246.6 151.6L247.5 149.9L248.4 151.2L249.3 152.7L250.2 151.7L251.1 152.9L252.0 153.3L252.9 143.7L253.8 153.4L254.7 147.2L255.6 151.4L256.5 150.3L257.4 152.8L258.3 148.9L259.2 146.1L260.1 151.0L261.0 148.9L261.9 151.0L262.8 153.7L263.7 151.9L264.6 152.6L265.5 150.0L266.4 152.1L267.3 153.6L268.2 150.7L269.1 150.2L270.0 152.9L270.9 152.0L271.8 152.6L272.7 152.8L273.6 150.8L274.5 152.8L275.4 152.1L276.3 152.2L277.2 151.8L278.1 149.5L279.0 152.6L279.9 148.2L280.8 149.3L281.7 150.7L282.6 151.9L283.5 152.6L284.4 146.5L285.3 149.4L286.2 153.5L287.1 153.1L288.0 147.0L288.9 153.2L289.8 152.9L290.7 152.9L291.6 152.4L292.5 153.1L293.4 150.5L294.3 151.0L295.2 151.8L296 172.7Z" fill="#3daee9"/><path d="M0.0 153.7L0.9 152.2L1.8 150.4L2.7 153.0L3.6 153.4L4.5 152.7L5.4 152.0L6.3 151.9L7.2 152.5L8.1 151.9L9.0 152.2L9.9 153.3L10.8 153.3L11.7 151.2L12.6 153.4L13.5 148.8L14.4 153.6L15.3 150.6L16.2 151.7L17.1 151.8L18.0 153.4L18.9 151.5L19.8 150.6L20.7 151.6L21.6 148.4L22.5 150.6L23.4 149.0L24.3 153.7L25.2 151.1L26.1 151.1L27.0 150.4L27.9 151.5L28.8 148.1L29.7 152.3L30.6 152.3L31.5 151.8L32.4 153.7L33.3 149.2L34.2 153.2L35.1 152.7L36.0 151.4L36.9 153.1L37.8 150.2L38.7 151.6L39.6 151.8L40.5 149.7L41.4 153.6L42.3 151.2L43.2 149.3L44.1 153.7L45.0 149.3L45.9 150.0L46.8 150.6L47.7 151.1L48.6 153.7L49.5 152.7L50.4 153.6L51.3 143.9L52.2 149.0L53.1 151.3L54.0 152.1L54.9 146.4L55.8 151.2L56.7 152.5L57.6 153.7L58.5 153.0L59.4 153.5L60.3 150.8L61.2 149.0L62.1 153.2L63.0 153.1L63.9 151.8L64.8 152.9L65.7 152.2L66.6 148.6L67.5 151.9L68.4 152.7L69.3 152.9L70.2 152.5L71.1 151.0L72.0 152.1L72.9 151.0L73.8 153.1L74.7 152.7L75.6 153.5L76.5 152.9L77.4 150.1L78.3 151.3L79.2 151.3L80.1 152.6L81.0 153.7L81.9 152.7L82.8 152.7L83.7 153.3L84.6 147.2L85.5 151.0L86.4 150.0L87.3 149.8L88.2 148.9L89.1 152.4L90.0 153.3L90.9 152.3L91.8 152.5L92.7 153.1L93.6 153.6L94.5 151.7L95.4 152.8L96.3 151.7L97.2 149.0L98.1 152.2L99.0 152.2L99.9 150.4L100.8 151.0L101.7 153.6L102.6 152.9L103.5 153.2L104.4 146.4L105.3 151.6L106.2 147.3L107.1 150.3L108.0 153.1L108.9 151.3L109.8 151.3L110.7 153.5L111.6 151.5L112.5 150.0L113.4 153.0L114.3 151.3L115.2 153.4L116.1 152.8L117.0 148.7L117.9 152.8L118.8 150.6L119.7 148.6L120.6 152.2L121.5 152.5L122.4 150.4L123.3 153.3L124.2 153.3L125.1 153.3L126.0 152.8L126.9 153.4L127.8 151.6L128.7 152.5L129.6 152.8L130.5 153.0L131.4 152.6L132.3 153.4L133.2 151.4L134.1 152.1L135.0 152.1L135.9 149.5L136.8 152.9L137.7 149.9L138.6 151.8L139.5 151.5L140.4 148.4L141.3 144.0L142.2 152.6L143.1 152.8L144.0 153.5L144.9 150.0L145.8 153.4L146.7 153.4L147.6 152.6L148.5 150.3L149.4 150.3L150.3 150.5L151.2 152.7L152.1 152.7L153.0 153.4L153.9 150.2L154.8 151.1L155.7 151.0L156.6 146.9L157.5 152.9L158.4 149.7L159.3 150.3L160.2 152.8L161.1 151.4L162.0 148.4L162.9 153.4L163.8 151.9L164.7 153.1L165.6 150.8L166.5 150.0L167.4 148.8L168.3 148.5L169.2 149.0L170.1 151.4L171.0 152.3L171.9 150.5L172.8 151.3L173.7 150.0L174.6 153.0L175.5 153.1L176.4 149.1L177.3 151.8L178.2 150.7L179.1 153.1L180.0 150.7L180.9 150.2L181.8 153.0L182.7 153.6L183.6 153.4L184.5 151.9L185.4 151.1L186.3 152.5L187.2 150.8L188.1 153.1L189.0 153.2L189.9 150.5L190.8 152.9L191.7 149.7L192.6 152.9L193.5 151.9L194.4 150.4L195.3 153.5L196.2 153.0L197.1 153.3L198.0 151.1L198.9 153.5L199.8 153.5L200.7 146.4L201.6 151.3L202.5 153.0L203.4 153.3L204.3 153.0L205.2 153.3L206.1 150.8L207.0 148.8L207.9 152.3L208.8 151.5L209.7 153.5L210.6 153.1L211.5 153.1L212.4 151.3L213.3 151.9L214.2 153.2L215.1 152.2L216.0 150.0L216.9 150.9L217.8 153.1L218.7 142.9L219.6 152.2L220.5 152.2L221.4 149.1L222.3 152.6L223.2 153.2L224.1 151.7L225.0 150.8L225.9 148.5L226.8 150.6L227.7 152.8L228.6 152.3L229.5 147.2L230.4 143.3L231.3 151.0L232.2 153.2L233.1 152.8L234.0 153.6L234.9 152.7L235.8 150.7L236.7 153.0L237.6 152.0L238.5 152.5L239.4 152.8L240.3 149.9L241.2 152.8L242.1 147.4L243.0 148.3L243.9 149.4L244.8 151.5L245.7 150.4L246.6 151.6L247.5 149.9L248.4 151.2L249.3 152.7L250.2 151.7L251.1 152.9L252.0 153.3L252.9 143.7L253.8 153.4L254.7 147.2L255.6 151.4L256.5 150.3L257.4 152.8L258.3 148.9L259.2 146.1L260.1 151.0L261.0 148.9L261.9 151.0L262.8 153.7L263.7 151.9L264.6 152.6L265.5 150.0L266.4 152.1L267.3 153.6L268.2 150.7L269.1 150.2L270.0 152.9L270.9 152.0L271.8 152.6L272.7 152.8L273.6 150.8L274.5 152.8L275.4 152.1L276.3 152.2L277.2 151.8L278.1 149.5L279.0 152.6L279.9 148.2L280.8 149.3L281.7 150.7L282.6 151.9L283.5 152.6L284.4 146.5L285.3 149.4L286.2 153.5L287.1 153.1L288.0 147.0L288.9 153.2L289.8 152.9L290.7 152.9L291.6 152.4L292.5 153.1L293.4 150.5L294.3 151.0L295.2 151.8" fill="none" stroke="#4a3a5c" stroke-width="0.700"/><path d="M28.8 152.6L29.6 18L30.4 152.6" fill="#3daee9" stroke="#3b3560" stroke-width="1.200"/><line x1="0.00" y1="0" x2="0.00" y2="8" stroke="#666666" stroke-width="1.500"/><line x1="0.00" y1="172.7" x2="0.00" y2="164.7" stroke="#666666" stroke-width="1.500"/><line x1="29.60" y1="0" x2="29.60" y2="5" stroke="#666666" stroke-width="1.500"/><line x1="29.60" y1="172.7" x2="29.60" y2="167.7" stroke="#666666" stroke-width="1.500"/><line x1="59.20" y1="0" x2="59.20" y2="8" stroke="#666666" stroke-width="1.500"/><line x1="59.20" y1="172.7" x2="59.20" y2="164.7" stroke="#666666" stroke-width="1.500"/><line x1="88.80" y1="0" x2="88.80" y2="5" stroke="#666666" stroke-width="1.500"/><line x1="88.80" y1="172.7" x2="88.80" y2="167.7" stroke="#666666" stroke-width="1.500"/><line x1="118.40" y1="0" x2="118.40" y2="8" stroke="#666666" stroke-width="1.500"/><line x1="118.40" y1="172.7" x2="118.40" y2="164.7" stroke="#666666" stroke-width="1.500"/><line x1="148.00" y1="0" x2="148.00" y2="5" stroke="#666666" stroke-width="1.500"/><line x1="148.00" y1="172.7" x2="148.00" y2="167.7" stroke="#666666" stroke-width="1.500"/><line x1="177.60" y1="0" x2="177.60" y2="8" stroke="#666666" stroke-width="1.500"/><line x1="177.60" y1="172.7" x2="177.60" y2="164.7" stroke="#666666" stroke-width="1.500"/><line x1="207.20" y1="0" x2="207.20" y2="5" stroke="#666666" stroke-width="1.500"/><line x1="207.20" y1="172.7" x2="207.20" y2="167.7" stroke="#666666" stroke-width="1.500"/><line x1="236.80" y1="0" x2="236.80" y2="8" stroke="#666666" stroke-width="1.500"/><line x1="236.80" y1="172.7" x2="236.80" y2="164.7" stroke="#666666" stroke-width="1.500"/><line x1="266.40" y1="0" x2="266.40" y2="5" stroke="#666666" stroke-width="1.500"/><line x1="266.40" y1="172.7" x2="266.40" y2="167.7" stroke="#666666" stroke-width="1.500"/><line x1="296.00" y1="0" x2="296.00" y2="8" stroke="#666666" stroke-width="1.500"/><line x1="296.00" y1="172.7" x2="296.00" y2="164.7" stroke="#666666" stroke-width="1.500"/><line x1="0" y1="0.00" x2="8" y2="0.00" stroke="#666666" stroke-width="1.500"/><line x1="296" y1="0.00" x2="288" y2="0.00" stroke="#666666" stroke-width="1.500"/><line x1="0" y1="28.78" x2="5" y2="28.78" stroke="#666666" stroke-width="1.500"/><line x1="296" y1="28.78" x2="291" y2="28.78" stroke="#666666" stroke-width="1.500"/><line x1="0" y1="57.57" x2="8" y2="57.57" stroke="#666666" stroke-width="1.500"/><line x1="296" y1="57.57" x2="288" y2="57.57" stroke="#666666" stroke-width="1.500"/><line x1="0" y1="86.35" x2="5" y2="86.35" stroke="#666666" stroke-width="1.500"/><line x1="296" y1="86.35" x2="291" y2="86.35" stroke="#666666" stroke-width="1.500"/><line x1="0" y1="115.13" x2="8" y2="115.13" stroke="#666666" stroke-width="1.500"/><line x1="296" y1="115.13" x2="288" y2="115.13" stroke="#666666" stroke-width="1.500"/><line x1="0" y1="143.92" x2="5" y2="143.92" stroke="#666666" stroke-width="1.500"/><line x1="296" y1="143.92" x2="291" y2="143.92" stroke="#666666" stroke-width="1.500"/><line x1="0" y1="172.70" x2="8" y2="172.70" stroke="#666666" stroke-width="1.500"/><line x1="296" y1="172.70" x2="288" y2="172.70" stroke="#666666" stroke-width="1.500"/><rect x="0" y="0" width="296" height="172.7" fill="none" stroke="#666666" stroke-width="1.500"/></g></svg>
<div class="t" style="left:126.0px;width:1000px;text-align:center;top:738px;font-size:12.6px;line-height:18px;color:#626262;">0,0</div>
<div class="t" style="left:185.20000000000005px;width:1000px;text-align:center;top:738px;font-size:12.6px;line-height:18px;color:#626262;">0,1</div>
<div class="t" style="left:244.39999999999998px;width:1000px;text-align:center;top:738px;font-size:12.6px;line-height:18px;color:#626262;">0,2</div>
<div class="t" style="left:303.6px;width:1000px;text-align:center;top:738px;font-size:12.6px;line-height:18px;color:#626262;">0,3</div>
<div class="t" style="left:362.79999999999995px;width:1000px;text-align:center;top:738px;font-size:12.6px;line-height:18px;color:#626262;">0,4</div>
<div class="t" style="left:422.0px;width:1000px;text-align:center;top:738px;font-size:12.6px;line-height:18px;color:#626262;">0,5</div>
<div class="t" style="left:-380.5px;width:1000px;text-align:right;top:550px;font-size:12.6px;line-height:18px;color:#626262;">0,6</div>
<div class="t" style="left:-380.5px;width:1000px;text-align:right;top:608px;font-size:12.6px;line-height:18px;color:#626262;">0,4</div>
<div class="t" style="left:-380.5px;width:1000px;text-align:right;top:665px;font-size:12.6px;line-height:18px;color:#626262;">0,2</div>
<div class="t" style="left:-380.5px;width:1000px;text-align:right;top:723px;font-size:12.6px;line-height:18px;color:#626262;">0,0</div>
<div class="t" style="left:274px;width:1000px;text-align:center;top:506px;font-size:17.6px;line-height:24px;color:#626262;">FFT</div>
<div class="t" style="left:277px;width:1000px;text-align:center;top:758px;font-size:17.6px;line-height:24px;color:#626262;">frequency</div>
<div class="t" style="left:487.5px;top:628px;width:200px;height:24px;line-height:24px;text-align:center;font-size:17.600px;color:#626262;transform:rotate(-90deg);">amplitude</div>
<div style="left:570px;top:802px;width:408px;height:285px;border:1px solid #6a6a6a;background:#fff;"></div>
<svg style="left:625px;top:858px;" width="298" height="173.2" viewBox="0 0 298 173.2"><g transform="translate(1,0)"><line x1="74.00" y1="0" x2="74.00" y2="173.2" stroke="#e2e2e2" stroke-width="1.6"/><line x1="148.00" y1="0" x2="148.00" y2="173.2" stroke="#e2e2e2" stroke-width="1.6"/><line x1="222.00" y1="0" x2="222.00" y2="173.2" stroke="#e2e2e2" stroke-width="1.6"/><line x1="0" y1="57.73" x2="296" y2="57.73" stroke="#e2e2e2" stroke-width="1.6"/><line x1="0" y1="115.47" x2="296" y2="115.47" stroke="#e2e2e2" stroke-width="1.6"/><line x1="37.00" y1="0" x2="37.00" y2="173.2" stroke="#d8d8d8" stroke-width="1" stroke-dasharray="1 2"/><line x1="111.00" y1="0" x2="111.00" y2="173.2" stroke="#d8d8d8" stroke-width="1" stroke-dasharray="1 2"/><line x1="185.00" y1="0" x2="185.00" y2="173.2" stroke="#d8d8d8" stroke-width="1" stroke-dasharray="1 2"/><line x1="259.00" y1="0" x2="259.00" y2="173.2" stroke="#d8d8d8" stroke-width="1" stroke-dasharray="1 2"/><line x1="0" y1="28.87" x2="296" y2="28.87" stroke="#d8d8d8" stroke-width="1" stroke-dasharray="1 2"/><line x1="0" y1="86.60" x2="296" y2="86.60" stroke="#d8d8d8" stroke-width="1" stroke-dasharray="1 2"/><line x1="0" y1="144.33" x2="296" y2="144.33" stroke="#d8d8d8" stroke-width="1" stroke-dasharray="1 2"/><path d="M0.0 77.4L0.7 77.3L1.5 76.9L2.2 76.4L3.0 75.7L3.7 74.9L4.4 74.2L5.2 73.5L5.9 73.0L6.7 72.6L7.4 72.5L8.2 72.9L9.0 74.2L9.8 76.0L10.5 78.0L11.3 79.8L12.1 81.1L12.9 81.5L13.7 80.8L14.5 79.1L15.4 77.3L16.2 76.6L16.9 77.3L17.6 79.2L18.3 81.6L19.0 83.5L19.7 84.3L20.5 82.1L21.2 75.8L22.0 66.5L22.8 55.5L23.5 44.5L24.3 35.1L25.0 28.9L25.8 26.7L26.6 28.7L27.4 33.8L28.2 40.2L29.1 45.3L29.9 47.3L30.6 49.9L31.3 56.7L32.0 65.2L32.7 72.1L33.4 74.7L34.3 77.4L35.1 80.2L35.8 77.9L36.6 71.4L37.3 61.7L38.1 50.3L38.9 38.8L39.6 29.2L40.4 22.7L41.1 20.4L41.9 23.3L42.7 31.2L43.4 42.1L44.2 52.9L45.0 60.8L45.8 63.7L46.7 68.2L47.6 77.1L48.5 81.5L49.3 80.0L50.0 75.5L50.7 68.5L51.5 59.7L52.2 50.0L53.0 40.3L53.7 31.5L54.4 24.5L55.2 20.0L55.9 18.5L56.7 21.9L57.5 31.2L58.3 43.8L59.0 56.5L59.8 65.8L60.6 69.2L61.4 71.9L62.2 74.7L63.0 70.2L63.7 61.3L64.4 56.9L65.3 60.6L66.2 68.2L67.2 71.9L67.9 72.6L68.6 74.0L69.4 74.7L70.1 74.3L70.8 73.4L71.5 71.9L72.3 70.1L73.0 68.2L73.7 66.5L74.5 65.0L75.2 64.0L75.9 63.7L76.6 64.4L77.4 66.1L78.1 68.2L78.8 69.9L79.5 70.6L80.3 67.2L81.1 58.9L82.0 50.7L82.8 47.3L83.7 43.8L84.6 37.0L85.5 33.6L86.3 32.6L87.2 30.1L88.0 26.9L88.8 24.4L89.6 23.4L90.4 23.8L91.2 25.1L92.0 26.8L92.8 28.8L93.6 30.5L94.3 31.8L95.1 32.2L95.9 32.3L96.6 32.8L97.4 33.5L98.1 34.3L98.9 35.4L99.6 36.4L100.4 37.4L101.1 38.3L101.8 39.0L102.6 39.4L103.3 39.6L104.1 39.4L104.9 38.7L105.7 37.8L106.5 36.7L107.3 35.8L108.0 35.2L108.8 34.9L109.5 34.6L110.2 33.6L110.9 32.3L111.6 30.7L112.4 29.4L113.1 28.4L113.8 28.1L114.6 30.1L115.4 34.9L116.2 39.8L117.1 41.8L118.0 48.6L118.9 62.3L119.8 69.2L120.7 70.2L121.6 72.3L122.5 73.3L123.4 70.3L124.2 62.4L125.0 52.7L125.8 44.8L126.6 41.8L127.4 40.0L128.2 35.1L129.0 27.9L129.8 20.0L130.6 12.9L131.3 7.9L132.1 6.1L132.9 7.3L133.6 10.3L134.4 13.2L135.1 14.4L135.9 16.2L136.7 21.0L137.4 26.9L138.2 31.7L139.0 33.6L139.7 32.9L140.5 31.1L141.3 28.2L142.0 24.7L142.8 21.0L143.5 17.5L144.3 14.7L145.1 12.8L145.8 12.2L146.6 12.8L147.4 14.4L148.2 16.8L149.0 19.4L149.7 21.7L150.5 23.4L151.3 24.0L152.1 23.6L152.9 22.7L153.7 21.3L154.4 19.8L155.2 18.4L156.0 17.4L156.8 17.1L157.6 19.5L158.4 25.6L159.3 33.3L160.1 39.4L160.9 41.8L161.7 44.9L162.4 53.1L163.2 63.3L164.0 71.5L164.7 74.7L165.5 74.1L166.2 73.0L166.9 72.5L167.7 73.7L168.4 76.2L169.1 77.4L170.0 68.5L171.0 50.7L171.9 41.8L172.6 40.2L173.3 36.1L174.0 31.0L174.7 26.9L175.4 25.3L176.2 25.9L176.9 27.7L177.7 30.2L178.5 33.3L179.2 36.3L180.0 38.9L180.7 40.6L181.5 41.2L182.2 40.8L182.9 39.4L183.6 37.4L184.3 34.9L185.0 32.2L185.7 29.7L186.4 27.7L187.1 26.3L187.8 25.9L188.5 26.3L189.3 27.5L190.0 29.4L190.7 31.8L191.5 34.5L192.2 37.2L193.0 39.6L193.7 41.5L194.4 42.7L195.2 43.2L195.9 42.7L196.7 41.4L197.4 39.3L198.1 36.7L198.9 33.8L199.6 31.0L200.4 28.4L201.1 26.3L201.8 25.0L202.6 24.5L203.3 25.3L204.0 27.5L204.7 30.9L205.4 35.0L206.1 39.5L206.8 43.6L207.5 47.0L208.2 49.2L208.9 50.0L209.7 51.3L210.4 54.9L211.2 60.1L212.0 65.9L212.8 71.1L213.6 74.8L214.4 76.0L215.1 75.1L215.8 72.4L216.5 68.6L217.2 64.3L217.9 60.5L218.6 57.8L219.3 56.9L220.1 58.1L220.9 61.3L221.6 65.8L222.4 70.2L223.2 73.5L224.0 74.7L224.7 74.3L225.4 73.3L226.2 71.7L226.9 69.6L227.6 67.2L228.4 64.4L229.1 61.6L229.9 58.9L230.6 56.4L231.3 54.3L232.1 52.7L232.8 51.7L233.6 51.4L234.4 53.5L235.2 59.0L236.0 65.7L236.8 71.2L237.7 73.3L238.5 72.9L239.3 71.9L240.1 71.0L241.0 70.6L241.7 71.2L242.4 72.6L243.1 73.3L243.9 71.7L244.7 67.0L245.4 60.0L246.2 51.8L246.9 43.6L247.7 36.6L248.4 31.9L249.2 30.3L249.9 31.6L250.6 35.5L251.3 41.4L252.0 48.6L252.7 56.3L253.4 63.6L254.1 69.5L254.8 73.3L255.5 74.7L256.3 76.0L257.1 77.4L257.9 75.8L258.6 71.2L259.3 64.1L260.1 55.3L260.8 46.0L261.5 37.3L262.2 30.2L263.0 25.6L263.7 24.0L264.5 26.2L265.3 32.5L266.1 41.5L266.8 51.6L267.6 60.7L268.4 67.0L269.2 69.2L270.0 75.4L270.8 81.5L271.6 80.7L272.3 78.8L273.1 76.8L273.8 76.0L274.6 76.7L275.3 78.4L276.0 80.5L276.7 82.2L277.4 82.9L278.2 82.5L279.1 81.5L279.9 80.2L280.7 79.2L281.5 78.8L281.5 94.4L280.7 94.0L279.9 93.0L279.1 91.7L278.2 90.7L277.4 90.3L276.7 91.0L276.0 92.7L275.3 94.8L274.6 96.5L273.8 97.2L273.1 96.4L272.3 94.4L271.6 92.5L270.8 91.7L270.0 97.8L269.2 104.0L268.4 106.2L267.6 112.5L266.8 121.6L266.1 131.7L265.3 140.7L264.5 147.0L263.7 149.2L263.0 147.6L262.2 143.0L261.5 135.9L260.8 127.2L260.1 117.9L259.3 109.1L258.6 102.0L257.9 97.4L257.1 95.8L256.3 97.2L255.5 98.5L254.8 99.9L254.1 103.7L253.4 109.6L252.7 116.9L252.0 124.6L251.3 131.8L250.6 137.7L249.9 141.6L249.2 142.9L248.4 141.3L247.7 136.6L246.9 129.6L246.2 121.4L245.4 113.2L244.7 106.2L243.9 101.5L243.1 99.9L242.4 100.6L241.7 102.0L241.0 102.6L240.1 102.2L239.3 101.3L238.5 100.3L237.7 99.9L236.8 102.0L236.0 107.5L235.2 114.2L234.4 119.7L233.6 121.8L232.8 121.5L232.1 120.5L231.3 118.9L230.6 116.8L229.9 114.3L229.1 111.6L228.4 108.8L227.6 106.0L226.9 103.6L226.2 101.5L225.4 99.9L224.7 98.9L224.0 98.5L223.2 99.7L222.4 103.0L221.6 107.4L220.9 111.9L220.1 115.1L219.3 116.3L218.6 115.4L217.9 112.7L217.2 108.9L216.5 104.6L215.8 100.8L215.1 98.1L214.4 97.2L213.6 98.4L212.8 102.1L212.0 107.3L211.2 113.1L210.4 118.3L209.7 121.9L208.9 123.2L208.2 124.0L207.5 126.2L206.8 129.6L206.1 133.7L205.4 138.2L204.7 142.3L204.0 145.7L203.3 147.9L202.6 148.7L201.8 148.2L201.1 146.9L200.4 144.8L199.6 142.2L198.9 139.4L198.1 136.5L197.4 133.9L196.7 131.8L195.9 130.5L195.2 130.0L194.4 130.5L193.7 131.7L193.0 133.6L192.2 136.0L191.5 138.7L190.7 141.4L190.0 143.8L189.3 145.7L188.5 146.9L187.8 147.3L187.1 146.9L186.4 145.5L185.7 143.5L185.0 141.0L184.3 138.3L183.6 135.8L182.9 133.8L182.2 132.4L181.5 132.0L180.7 132.6L180.0 134.3L179.2 136.9L178.5 139.9L177.7 143.0L176.9 145.5L176.2 147.3L175.4 147.9L174.7 146.3L174.0 142.2L173.3 137.1L172.6 133.0L171.9 131.4L171.0 122.5L170.0 104.7L169.1 95.8L168.4 97.0L167.7 99.5L166.9 100.7L166.2 100.2L165.5 99.1L164.7 98.5L164.0 101.7L163.2 109.9L162.4 120.1L161.7 128.3L160.9 131.4L160.1 133.8L159.3 139.9L158.4 147.6L157.6 153.7L156.8 156.1L156.0 155.8L155.2 154.8L154.4 153.4L153.7 151.9L152.9 150.5L152.1 149.6L151.3 149.2L150.5 149.8L149.7 151.5L149.0 153.8L148.2 156.4L147.4 158.8L146.6 160.4L145.8 161.0L145.1 160.4L144.3 158.5L143.5 155.7L142.8 152.2L142.0 148.5L141.3 145.0L140.5 142.1L139.7 140.3L139.0 139.6L138.2 141.5L137.4 146.3L136.7 152.2L135.9 157.0L135.1 158.8L134.4 160.0L133.6 162.9L132.9 165.9L132.1 167.1L131.3 165.3L130.6 160.3L129.8 153.2L129.0 145.3L128.2 138.1L127.4 133.2L126.6 131.4L125.8 128.4L125.0 120.5L124.2 110.8L123.4 102.9L122.5 99.9L121.6 100.9L120.7 103.0L119.8 104.0L118.9 110.9L118.0 124.6L117.1 131.4L116.2 133.4L115.4 138.3L114.6 143.1L113.8 145.1L113.1 144.8L112.4 143.8L111.6 142.5L110.9 140.9L110.2 139.6L109.5 138.6L108.8 138.3L108.0 138.0L107.3 137.4L106.5 136.5L105.7 135.4L104.9 134.5L104.1 133.8L103.3 133.6L102.6 133.8L101.8 134.2L101.1 134.9L100.4 135.8L99.6 136.8L98.9 137.8L98.1 138.9L97.4 139.7L96.6 140.4L95.9 140.9L95.1 141.0L94.3 141.4L93.6 142.7L92.8 144.4L92.0 146.4L91.2 148.1L90.4 149.4L89.6 149.8L88.8 148.8L88.0 146.3L87.2 143.1L86.3 140.6L85.5 139.6L84.6 136.2L83.7 129.4L82.8 125.9L82.0 122.5L81.1 114.3L80.3 106.0L79.5 102.6L78.8 103.3L78.1 105.0L77.4 107.1L76.6 108.8L75.9 109.5L75.2 109.2L74.5 108.2L73.7 106.7L73.0 105.0L72.3 103.1L71.5 101.3L70.8 99.8L70.1 98.9L69.4 98.5L68.6 99.2L67.9 100.6L67.2 101.3L66.2 105.0L65.3 112.6L64.4 116.3L63.7 111.9L63.0 103.0L62.2 98.5L61.4 101.3L60.6 104.0L59.8 107.4L59.0 116.7L58.3 129.4L57.5 142.0L56.7 151.3L55.9 154.7L55.2 153.2L54.4 148.7L53.7 141.7L53.0 132.9L52.2 123.2L51.5 113.5L50.7 104.7L50.0 97.7L49.3 93.2L48.5 91.7L47.6 96.1L46.7 105.0L45.8 109.5L45.0 112.4L44.2 120.3L43.4 131.1L42.7 142.0L41.9 149.9L41.1 152.8L40.4 150.5L39.6 144.0L38.9 134.4L38.1 122.9L37.3 111.5L36.6 101.8L35.8 95.3L35.1 93.0L34.3 95.8L33.4 98.5L32.7 101.1L32.0 108.0L31.3 116.5L30.6 123.3L29.9 125.9L29.1 127.9L28.2 133.0L27.4 139.4L26.6 144.5L25.8 146.5L25.0 144.3L24.3 138.1L23.5 128.7L22.8 117.7L22.0 106.7L21.2 97.4L20.5 91.1L19.7 88.9L19.0 89.7L18.3 91.6L17.6 94.0L16.9 95.9L16.2 96.6L15.4 95.9L14.5 94.1L13.7 92.4L12.9 91.7L12.1 92.1L11.3 93.4L10.5 95.2L9.8 97.2L9.0 99.0L8.2 100.3L7.4 100.7L6.7 100.6L5.9 100.2L5.2 99.7L4.4 99.0L3.7 98.3L3.0 97.5L2.2 96.8L1.5 96.3L0.7 95.9L0.0 95.8Z" fill="#0000ff" stroke="#0000ff" stroke-width="0.800"/><line x1="0.00" y1="0" x2="0.00" y2="8" stroke="#666666" stroke-width="1.500"/><line x1="0.00" y1="173.2" x2="0.00" y2="165.2" stroke="#666666" stroke-width="1.500"/><line x1="37.00" y1="0" x2="37.00" y2="5" stroke="#666666" stroke-width="1.500"/><line x1="37.00" y1="173.2" x2="37.00" y2="168.2" stroke="#666666" stroke-width="1.500"/><line x1="74.00" y1="0" x2="74.00" y2="8" stroke="#666666" stroke-width="1.500"/><line x1="74.00" y1="173.2" x2="74.00" y2="165.2" stroke="#666666" stroke-width="1.500"/><line x1="111.00" y1="0" x2="111.00" y2="5" stroke="#666666" stroke-width="1.500"/><line x1="111.00" y1="173.2" x2="111.00" y2="168.2" stroke="#666666" stroke-width="1.500"/><line x1="148.00" y1="0" x2="148.00" y2="8" stroke="#666666" stroke-width="1.500"/><line x1="148.00" y1="173.2" x2="148.00" y2="165.2" stroke="#666666" stroke-width="1.500"/><line x1="185.00" y1="0" x2="185.00" y2="5" stroke="#666666" stroke-width="1.500"/><line x1="185.00" y1="173.2" x2="185.00" y2="168.2" stroke="#666666" stroke-width="1.500"/><line x1="222.00" y1="0" x2="222.00" y2="8" stroke="#666666" stroke-width="1.500"/><line x1="222.00" y1="173.2" x2="222.00" y2="165.2" stroke="#666666" stroke-width="1.500"/><line x1="259.00" y1="0" x2="259.00" y2="5" stroke="#666666" stroke-width="1.500"/><line x1="259.00" y1="173.2" x2="259.00" y2="168.2" stroke="#666666" stroke-width="1.500"/><line x1="296.00" y1="0" x2="296.00" y2="8" stroke="#666666" stroke-width="1.500"/><line x1="296.00" y1="173.2" x2="296.00" y2="165.2" stroke="#666666" stroke-width="1.500"/><line x1="0" y1="0.00" x2="8" y2="0.00" stroke="#666666" stroke-width="1.500"/><line x1="296" y1="0.00" x2="288" y2="0.00" stroke="#666666" stroke-width="1.500"/><line x1="0" y1="28.87" x2="5" y2="28.87" stroke="#666666" stroke-width="1.500"/><line x1="296" y1="28.87" x2="291" y2="28.87" stroke="#666666" stroke-width="1.500"/><line x1="0" y1="57.73" x2="8" y2="57.73" stroke="#666666" stroke-width="1.500"/><line x1="296" y1="57.73" x2="288" y2="57.73" stroke="#666666" stroke-width="1.500"/><line x1="0" y1="86.60" x2="5" y2="86.60" stroke="#666666" stroke-width="1.500"/><line x1="296" y1="86.60" x2="291" y2="86.60" stroke="#666666" stroke-width="1.500"/><line x1="0" y1="115.47" x2="8" y2="115.47" stroke="#666666" stroke-width="1.500"/><line x1="296" y1="115.47" x2="288" y2="115.47" stroke="#666666" stroke-width="1.500"/><line x1="0" y1="144.33" x2="5" y2="144.33" stroke="#666666" stroke-width="1.500"/><line x1="296" y1="144.33" x2="291" y2="144.33" stroke="#666666" stroke-width="1.500"/><line x1="0" y1="173.20" x2="8" y2="173.20" stroke="#666666" stroke-width="1.500"/><line x1="296" y1="173.20" x2="288" y2="173.20" stroke="#666666" stroke-width="1.500"/><rect x="0" y="0" width="296" height="173.2" fill="none" stroke="#666666" stroke-width="1.500"/></g></svg>
<div class="t" style="left:126.0px;width:1000px;text-align:center;top:1041px;font-size:12.6px;line-height:18px;color:#626262;">0</div>
<div class="t" style="left:200.0px;width:1000px;text-align:center;top:1041px;font-size:12.6px;line-height:18px;color:#626262;">2</div>
<div class="t" style="left:274.0px;width:1000px;text-align:center;top:1041px;font-size:12.6px;line-height:18px;color:#626262;">4</div>
<div class="t" style="left:348.0px;width:1000px;text-align:center;top:1041px;font-size:12.6px;line-height:18px;color:#626262;">6</div>
<div class="t" style="left:422.0px;width:1000px;text-align:center;top:1041px;font-size:12.6px;line-height:18px;color:#626262;">8</div>
<div class="t" style="left:-380.5px;width:1000px;text-align:right;top:852px;font-size:12.6px;line-height:18px;color:#626262;">1,5</div>
<div class="t" style="left:-380.5px;width:1000px;text-align:right;top:910px;font-size:12.6px;line-height:18px;color:#626262;">0,5</div>
<div class="t" style="left:-380.5px;width:1000px;text-align:right;top:968px;font-size:12.6px;line-height:18px;color:#626262;">-0,5</div>
<div class="t" style="left:-380.5px;width:1000px;text-align:right;top:1025px;font-size:12.6px;line-height:18px;color:#626262;">-1,5</div>
<div class="t" style="left:274px;width:1000px;text-align:center;top:808px;font-size:17.6px;line-height:24px;color:#626262;">Filtered signal</div>
<div class="t" style="left:277px;width:1000px;text-align:center;top:1063px;font-size:17.6px;line-height:24px;color:#626262;">t</div>
<div class="t" style="left:-82.5px;width:1000px;text-align:right;top:1060px;font-size:12.6px;line-height:18px;color:#626262;">×10000</div>
<div class="t" style="left:484px;top:932px;width:200px;height:24px;line-height:24px;text-align:center;font-size:17.600px;color:#626262;transform:rotate(-90deg);">signal</div>
<div class="t" style="left:1003.3px;top:194px;font-size:15.1px;line-height:21px;color:#626262;">The data was generated using the following Octave code:</div>
<div class="t" style="left:1003.3px;top:238px;font-size:10px;line-height:15px;color:#626262;font-style:italic;letter-spacing:-0.350px;">t=1:1:4000;</div>
<div class="t" style="left:1003.3px;top:253px;font-size:10px;line-height:15px;color:#626262;font-style:italic;letter-spacing:-0.350px;">f=.05; % Signal frequency</div>
<div class="t" style="left:1003.3px;top:267px;font-size:10px;line-height:15px;color:#626262;font-style:italic;letter-spacing:-0.350px;">noise=4; % RMS random noise</div>
<div class="t" style="left:1003.3px;top:281px;font-size:10px;line-height:15px;color:#626262;font-style:italic;letter-spacing:-0.350px;">s=sin(2*pi*f*t);</div>
<div class="t" style="left:1003.3px;top:296px;font-size:10px;line-height:15px;color:#626262;font-style:italic;letter-spacing:-0.350px;">space=zeros(size(t)); % Small interval of silence</div>
<div class="t" style="left:1003.3px;top:310px;font-size:10px;line-height:15px;color:#626262;font-style:italic;letter-spacing:-0.350px;">dit=[space s ];</div>
<div class="t" style="left:1003.3px;top:325px;font-size:10px;line-height:15px;color:#626262;font-style:italic;letter-spacing:-0.350px;">dash=[space s s s s s];</div>
<div class="t" style="left:1003.3px;top:339px;font-size:10px;line-height:15px;color:#626262;font-style:italic;letter-spacing:-0.350px;">ess=[space dit dit dit space]; % the letter &quot;S&quot; in Morse Code</div>
<div class="t" style="left:1003.3px;top:353px;font-size:10px;line-height:15px;color:#626262;font-style:italic;letter-spacing:-0.350px;">oh=[space dash dash dash space];  % the letter &quot;O&quot; in Morse Code</div>
<div class="t" style="left:1003.3px;top:368px;font-size:10px;line-height:15px;color:#626262;font-style:italic;letter-spacing:-0.350px;">sos=[space ess oh ess space];  % &quot;SOS&quot; in Morse Code, surrounded by spaces</div>
<div class="t" style="left:1003.3px;top:382px;font-size:10px;line-height:15px;color:#626262;font-style:italic;letter-spacing:-0.350px;">signal=std(sos);</div>
<div class="t" style="left:1003.3px;top:396px;font-size:10px;line-height:15px;color:#626262;font-style:italic;letter-spacing:-0.350px;">SNR=signal/std(noise.*randn(size(sos))) % Signal-To-Noise ratio</div>
<div class="t" style="left:1003.3px;top:411px;font-size:10px;line-height:15px;color:#626262;font-style:italic;letter-spacing:-0.350px;">nsos=sos+noise.*randn(size(sos));  % Add lots of random white noise</div>
<div class="t" style="left:1003.3px;top:425px;font-size:10px;line-height:15px;color:#626262;font-style:italic;letter-spacing:-0.350px;">nsos=nsos./max(sos);</div>
<div class="t" style="left:1003.3px;top:454px;font-size:15.1px;line-height:21px;color:#626262;">It creates a pulsed fixed frequency sine wave that spells out &quot;SOS&quot;</div>
<div class="t" style="left:1003.3px;top:475px;font-size:15.1px;line-height:21px;color:#626262;">in Morse code and adds random white noise so that the SNR is poor.</div>
<div class="t" style="left:1013.6px;top:601px;font-size:15.2px;line-height:21px;color:#626262;">The white noise has a frequency spectrum that is spread out over</div>
<div class="t" style="left:1017.4px;top:622px;font-size:15.2px;line-height:21px;color:#626262;">the entire range of frequencies. The signal itself is concentrated</div>
<div class="t" style="left:1013.6px;top:643px;font-size:15.2px;line-height:21px;color:#626262;">mostly at a fixed frequency 0.05 but the presence of the Morse</div>
<div class="t" style="left:1013.6px;top:663px;font-size:15.2px;line-height:21px;color:#626262;">Code pulses spreads out its spectrum.</div>
<div class="t" style="left:1009.1px;top:885px;font-size:15.25px;line-height:21px;color:#626262;">A Fourier bandpass filter tuned to the signal frequency isolates the</div>
<div class="t" style="left:1009.1px;top:906px;font-size:15.25px;line-height:21px;color:#626262;">signal from the noise.</div>
<div class="t" style="left:1009.1px;top:947px;font-size:15.25px;line-height:21px;color:#626262;">Try out different values for the width of the bandpass filter to see</div>
<div class="t" style="left:1009.1px;top:968px;font-size:15.25px;line-height:21px;color:#626262;">how and when the signal starts emerging from the noise.</div>
<div style="left:1514px;top:126px;width:425px;height:1035px;border:1px solid #53575b;border-radius:3px;"></div>
<div class="t" style="left:1519.5px;top:130px;font-size:13.9px;line-height:20px;color:#fcfcfc;">Fourier Transform</div>
<svg style="left:1895px;top:133px;" width="12" height="12" viewBox="0 0 12 12"><path fill="none" stroke="#c8cacc" stroke-width="1" d="M6 1.500L10.500 6L6 10.500L1.500 6z"/></svg>
<svg style="left:1916px;top:131px;" width="16" height="16" viewBox="0 0 16 16"><circle cx="8" cy="8" r="8" fill="#a0a2a4"/><path fill="none" stroke="#232629" stroke-width="1" d="M4.500 4.500L11.500 11.500M11.500 4.500L4.500 11.500"/></svg>
<div style="left:1516px;top:157px;width:421px;height:1002px;background:#1b1e20;border:1px solid #3daee9;border-radius:3px;"></div>
<div style="left:1524px;top:193px;width:405px;height:898px;background:#272a2e;border:1px solid #53575b;border-radius:0 3px 3px 3px;"></div>
<div style="left:1604px;top:165px;width:320px;height:28px;background:#1d2023;"></div>
<div style="left:1524px;top:164px;width:80px;height:31px;background:#272a2e;border:1px solid #53575b;border-bottom:none;border-radius:3px 3px 0 0;"></div>
<div style="left:1524px;top:164px;width:80px;height:3px;background:#3daee9;border-radius:3px 3px 0 0;"></div>
<div class="t" style="left:1064px;width:1000px;text-align:center;top:170px;font-size:13.7px;line-height:19px;color:#fcfcfc;">General</div>
<div class="t" style="left:1144px;width:1000px;text-align:center;top:170px;font-size:13.7px;line-height:19px;color:#fcfcfc;">Line</div>
<div class="t" style="left:1224px;width:1000px;text-align:center;top:170px;font-size:13.7px;line-height:19px;color:#fcfcfc;">Symbol</div>
<div class="t" style="left:1304px;width:1000px;text-align:center;top:170px;font-size:13.7px;line-height:19px;color:#fcfcfc;">Values</div>
<div class="t" style="left:1384px;width:1000px;text-align:center;top:170px;font-size:13.7px;line-height:19px;color:#fcfcfc;">Filling</div>
<div class="t" style="left:1529.5px;top:205px;font-size:13.7px;line-height:19px;color:#fcfcfc;">Name:</div>
<div style="left:1619px;top:199px;width:304px;height:30px;background:#1b1e20;border:1px solid #53575b;border-radius:3px;"></div>
<div class="t" style="left:1626.5px;top:205px;font-size:13.7px;line-height:19px;color:#fcfcfc;">Fourier transform</div>
<div class="t" style="left:1529.5px;top:241px;font-size:13.7px;line-height:19px;color:#fcfcfc;">Comment:</div>
<div style="left:1619px;top:233px;width:304px;height:34px;background:#1b1e20;border:1px solid #53575b;border-radius:3px;"></div>
<div class="t" style="left:1529.5px;top:288px;font-size:12.9px;line-height:19px;color:#fcfcfc;font-weight:bold;letter-spacing:-0.300px;">Data</div>
<div class="t" style="left:1529.5px;top:315px;font-size:13.7px;line-height:19px;color:#fcfcfc;">x-Data:</div>
<div style="left:1619px;top:309px;width:304px;height:30px;background:linear-gradient(#363b40,#31363b);border:1px solid #5b5f63;border-radius:3px;"></div>
<div class="t" style="left:1626px;top:315px;font-size:13.7px;line-height:19px;color:#fcfcfc;">t [X]</div>
<svg style="left:1903px;top:316.0px;" width="16" height="16" viewBox="0 0 16 16"><path fill="none" stroke="#fcfcfc" stroke-width="1.1" d="M3 6L8 11L13 6"/></svg>
<div class="t" style="left:1529.5px;top:349px;font-size:13.7px;line-height:19px;color:#fcfcfc;">y-Data:</div>
<div style="left:1619px;top:343px;width:304px;height:30px;background:linear-gradient(#363b40,#31363b);border:1px solid #5b5f63;border-radius:3px;"></div>
<div class="t" style="left:1626px;top:349px;font-size:13.7px;line-height:19px;color:#fcfcfc;">signal [Y]</div>
<svg style="left:1903px;top:350.0px;" width="16" height="16" viewBox="0 0 16 16"><path fill="none" stroke="#fcfcfc" stroke-width="1.1" d="M3 6L8 11L13 6"/></svg>
<div class="t" style="left:1529.5px;top:378px;font-size:13.7px;line-height:19px;color:#fcfcfc;">x-Range:</div>
<div style="left:1620px;top:379px;width:16px;height:16px;background:#1d4a63;border:1px solid #3daee9;border-radius:3px;"></div>
<svg style="left:1620px;top:379px;" width="16" height="16" viewBox="0 0 16 16"><path fill="none" stroke="#fcfcfc" stroke-width="1.7" d="M3.500 8.500L6.500 11.500L12.500 5"/></svg>
<div class="t" style="left:1642px;top:378px;font-size:13.7px;line-height:19px;color:#fcfcfc;">Auto</div>
<div class="t" style="left:1618.8px;top:407px;font-size:13.7px;line-height:19px;color:#5f6468;">Minimum:</div>
<div style="left:1684px;top:401px;width:239px;height:30px;background:#1b1e20;border:1px solid #3b3f43;border-radius:3px;"></div>
<div class="t" style="left:1691.5px;top:407px;font-size:13.7px;line-height:19px;color:#5f6468;">1</div>
<div class="t" style="left:1618.8px;top:441px;font-size:13.7px;line-height:19px;color:#5f6468;">Maximum:</div>
<div style="left:1687px;top:436px;width:236px;height:29px;background:#1b1e20;border:1px solid #3b3f43;border-radius:3px;"></div>
<div class="t" style="left:1694.5px;top:441px;font-size:13.7px;line-height:19px;color:#5f6468;">76000</div>
<div class="t" style="left:1529.5px;top:486px;font-size:12.9px;line-height:19px;color:#fcfcfc;font-weight:bold;letter-spacing:-0.300px;">Options</div>
<div class="t" style="left:1529.5px;top:513px;font-size:13.7px;line-height:19px;color:#fcfcfc;">Window:</div>
<div style="left:1619px;top:507px;width:304px;height:30px;background:linear-gradient(#363b40,#31363b);border:1px solid #5b5f63;border-radius:3px;"></div>
<div class="t" style="left:1626px;top:513px;font-size:13.7px;line-height:19px;color:#fcfcfc;">rectangular (uniform)</div>
<svg style="left:1903px;top:514.0px;" width="16" height="16" viewBox="0 0 16 16"><path fill="none" stroke="#fcfcfc" stroke-width="1.1" d="M3 6L8 11L13 6"/></svg>
<div class="t" style="left:1529.5px;top:547px;font-size:13.7px;line-height:19px;color:#fcfcfc;">Output:</div>
<div style="left:1619px;top:541px;width:304px;height:30px;background:linear-gradient(#363b40,#31363b);border:1px solid #5b5f63;border-radius:3px;"></div>
<div class="t" style="left:1626px;top:547px;font-size:13.7px;line-height:19px;color:#fcfcfc;">Amplitude</div>
<svg style="left:1903px;top:548.0px;" width="16" height="16" viewBox="0 0 16 16"><path fill="none" stroke="#fcfcfc" stroke-width="1.1" d="M3 6L8 11L13 6"/></svg>
<div style="left:1620px;top:577px;width:16px;height:16px;background:#1d2023;border:1px solid #5b5f63;border-radius:3px;"></div>
<div class="t" style="left:1642px;top:576px;font-size:13.7px;line-height:19px;color:#fcfcfc;">Two sided</div>
<div style="left:1774px;top:577px;width:16px;height:16px;background:#202326;border:1px solid #33373b;border-radius:3px;"></div>
<div class="t" style="left:1796px;top:576px;font-size:13.7px;line-height:19px;color:#5f6468;">Shifted</div>
<div class="t" style="left:1529.5px;top:605px;font-size:13.7px;line-height:19px;color:#fcfcfc;">X axis scale:</div>
<div style="left:1619px;top:599px;width:304px;height:30px;background:linear-gradient(#363b40,#31363b);border:1px solid #5b5f63;border-radius:3px;"></div>
<div class="t" style="left:1626px;top:605px;font-size:13.7px;line-height:19px;color:#fcfcfc;">Frequency</div>
<svg style="left:1903px;top:606.0px;" width="16" height="16" viewBox="0 0 16 16"><path fill="none" stroke="#fcfcfc" stroke-width="1.1" d="M3 6L8 11L13 6"/></svg>
<div class="t" style="left:1529.5px;top:650px;font-size:12.9px;line-height:19px;color:#fcfcfc;font-weight:bold;letter-spacing:-0.300px;">Results:</div>
<div style="left:1619px;top:651px;width:304px;height:189px;background:#1b1e20;border:1px solid #53575b;border-radius:3px;"></div>
<div class="t" style="left:1624px;top:656px;font-size:13.7px;line-height:19px;color:#fcfcfc;">status: Success</div>
<div class="t" style="left:1624px;top:674px;font-size:13.7px;line-height:19px;color:#fcfcfc;">calculation time: 87 ms</div>
<div style="left:1529px;top:845px;width:395px;height:1px;background:#4a4e52;"></div>
<div style="left:1839px;top:850px;width:84px;height:32px;background:#2d3135;border:1px solid #3f4347;border-radius:3px;"></div>
<div class="t" style="left:1381px;width:1000px;text-align:center;top:857px;font-size:13.7px;line-height:19px;color:#5f6468;">Recalculate</div>
<div class="t" style="left:1529.5px;top:892px;font-size:13.7px;line-height:19px;color:#fcfcfc;">Plot range:</div>
<div style="left:1619px;top:886px;width:216px;height:30px;background:#2d3135;border:1px solid #3f4347;border-radius:3px;"></div>
<div class="t" style="left:1626px;top:892px;font-size:13.7px;line-height:19px;color:#5f6468;">1 : x = 0 .. 0,5, y = 0 .. 0,6</div>
<svg style="left:1813px;top:893.0px;" width="16" height="16" viewBox="0 0 16 16"><path fill="none" stroke="#5f6468" stroke-width="1.1" d="M3 6L8 11L13 6"/></svg>
<div style="left:1531px;top:1067px;width:16px;height:16px;background:#1d4a63;border:1px solid #3daee9;border-radius:3px;"></div>
<svg style="left:1531px;top:1067px;" width="16" height="16" viewBox="0 0 16 16"><path fill="none" stroke="#fcfcfc" stroke-width="1.7" d="M3.500 8.500L6.500 11.500L12.500 5"/></svg>
<div class="t" style="left:1552.6px;top:1066px;font-size:13.7px;line-height:19px;color:#fcfcfc;">Visible</div>
<div style="left:1817px;top:1104px;width:36px;height:36px;background:#2f3338;border:1px solid #3f4347;border-radius:3px;"></div>
<svg style="left:1824px;top:1111px;" width="22" height="22" viewBox="0 0 22 22"><path fill="#a9abad" fill-rule="evenodd" d="M3 3h7.300l2 2H19v14H3zM4 10.300v7.700h14V8.200H9.100L7.300 10.300z"/></svg>
<div style="left:1855px;top:1104px;width:36px;height:36px;background:linear-gradient(#363b40,#31363b);border:1px solid #5b5f63;border-radius:3px;"></div>
<svg style="left:1862px;top:1111px;" width="22" height="22" viewBox="0 0 22 22"><path fill="none" stroke="#fcfcfc" stroke-width="1" d="M3.500 3.500H15.800L18.500 6.200V18.500H3.500z"/><path fill="#fcfcfc" fill-rule="evenodd" d="M6.500 3.500h8.500v6h-8.500zM8.200 4.500v3.500h3.600v-3.500z"/><path fill="none" stroke="#fcfcfc" stroke-width="1.2" d="M6.600 18.500v-6.900h8.800v6.900"/></svg>
<div style="left:1893px;top:1104px;width:36px;height:36px;background:linear-gradient(#363b40,#31363b);border:1px solid #5b5f63;border-radius:3px;"></div>
<svg style="left:1900px;top:1111px;" width="22" height="22" viewBox="0 0 22 22"><path fill="none" stroke="#fcfcfc" stroke-width="1" d="M11.500 18.500H3.500V3.500H15.800L18.500 6.200V10"/><path fill="#fcfcfc" fill-rule="evenodd" d="M6.500 3.500h8.500v6h-8.500zM8.200 4.500v3.500h3.600v-3.500z"/><path fill="none" stroke="#fcfcfc" stroke-width="1.2" d="M6.600 18.500v-6.900h7"/><path fill="none" stroke="#fcfcfc" stroke-width="1.1" d="M17.300 11.200l2.300 2.300l-5.800 5.800h-2.300v-2.300z"/></svg>
<div class="t" style="left:938.5px;width:1000px;text-align:right;top:1165px;font-size:13.7px;line-height:19px;color:#fcfcfc;">Memory used 348 MB, peak 3.811 MB</div>
</body></html>
